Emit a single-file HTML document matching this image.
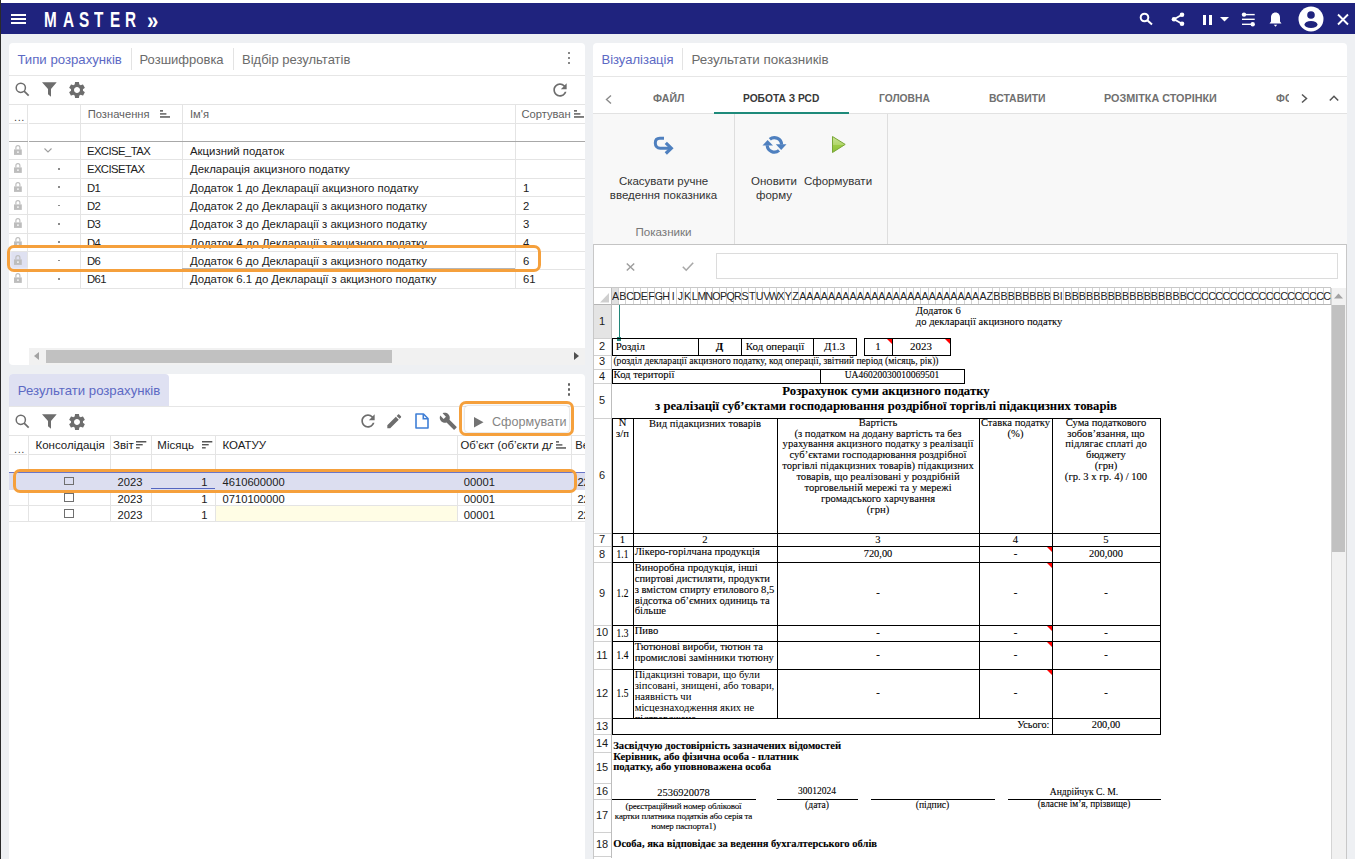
<!DOCTYPE html><html><head><meta charset="utf-8"><style>
html,body{margin:0;padding:0}
body{width:1355px;height:859px;overflow:hidden;position:relative;background:#eef0f3;font-family:"Liberation Sans",sans-serif;color:#212121}
div{box-sizing:border-box}
svg{position:absolute;overflow:visible}
.ss{font-family:"Liberation Serif",serif;color:#000}
.fs{-webkit-text-stroke:0.2px #000}
</style></head><body>
<div style="position:absolute;left:0px;top:0px;width:1355px;height:3px;background:#fff"></div>
<div style="position:absolute;left:0px;top:0px;width:1px;height:859px;background:#2a2a2a;z-index:50"></div>
<div style="position:absolute;left:1px;top:3px;width:1354px;height:31px;background:#1f237e"></div>
<div style="position:absolute;left:11px;top:14.1px;width:15px;height:1.75px;background:#fff"></div>
<div style="position:absolute;left:11px;top:18.1px;width:15px;height:1.75px;background:#fff"></div>
<div style="position:absolute;left:11px;top:22.1px;width:15px;height:1.75px;background:#fff"></div>
<div style="position:absolute;left:43.5px;top:7.2px;white-space:pre;font:bold 22.5px 'Liberation Sans', sans-serif;color:#fff;transform:scaleX(0.68);transform-origin:0 0">M</div>
<div style="position:absolute;left:62.6px;top:7.2px;white-space:pre;font:bold 22.5px 'Liberation Sans', sans-serif;color:#fff;transform:scaleX(0.68);transform-origin:0 0">A</div>
<div style="position:absolute;left:79.3px;top:7.2px;white-space:pre;font:bold 22.5px 'Liberation Sans', sans-serif;color:#fff;transform:scaleX(0.68);transform-origin:0 0">S</div>
<div style="position:absolute;left:93.9px;top:7.2px;white-space:pre;font:bold 22.5px 'Liberation Sans', sans-serif;color:#fff;transform:scaleX(0.68);transform-origin:0 0">T</div>
<div style="position:absolute;left:109.6px;top:7.2px;white-space:pre;font:bold 22.5px 'Liberation Sans', sans-serif;color:#fff;transform:scaleX(0.68);transform-origin:0 0">E</div>
<div style="position:absolute;left:124.6px;top:7.2px;white-space:pre;font:bold 22.5px 'Liberation Sans', sans-serif;color:#fff;transform:scaleX(0.68);transform-origin:0 0">R</div>
<div style="position:absolute;left:147.2px;top:6.5px;white-space:pre;font:bold 24px 'Liberation Sans', sans-serif;color:#fff;transform:scaleX(0.85);transform-origin:0 0">»</div>
<svg style="left:1139px;top:12px" width="15" height="14" viewBox="0 0 15 14"><circle cx="5.5" cy="5.5" r="3.8" fill="none" stroke="#fff" stroke-width="2"/><line x1="8.3" y1="8.3" x2="13" y2="12.6" stroke="#fff" stroke-width="2"/></svg>
<svg style="left:1171px;top:12px" width="15" height="15" viewBox="0 0 15 15"><circle cx="11" cy="2.8" r="2.3" fill="#fff"/><circle cx="3" cy="7.3" r="2.3" fill="#fff"/><circle cx="11" cy="11.8" r="2.3" fill="#fff"/><path d="M11 2.8 L3 7.3 L11 11.8" fill="none" stroke="#fff" stroke-width="1.8"/></svg>
<div style="position:absolute;left:1203px;top:14.5px;width:3px;height:10px;background:#fff"></div>
<div style="position:absolute;left:1209px;top:14.5px;width:3px;height:10px;background:#fff"></div>
<svg style="left:1219.5px;top:17px" width="9" height="5" viewBox="0 0 9 5"><path d="M0 0 L9 0 L4.5 4.5Z" fill="#fff"/></svg>
<svg style="left:1241px;top:12px" width="15" height="15" viewBox="0 0 15 15"><rect x="1" y="1.9" width="12.7" height="1.4" fill="#fff"/><rect x="1" y="6.6" width="12.7" height="1.4" fill="#fff"/><rect x="1" y="11.6" width="10.7" height="1.4" fill="#fff"/><circle cx="3" cy="2.6" r="2.2" fill="#fff"/><circle cx="11.7" cy="12.3" r="2.2" fill="#fff"/></svg>
<svg style="left:1269px;top:11.5px" width="13" height="15" viewBox="0 0 13 15"><path d="M6.5 0.5 C3.6 0.5 2 2.8 2 5.5 V9.5 L0.5 11.5 H12.5 L11 9.5 V5.5 C11 2.8 9.4 0.5 6.5 0.5Z" fill="#fff"/><path d="M4.8 12.8 H8.2 L6.5 14.8Z" fill="#fff"/></svg>
<svg style="left:1297.5px;top:6px" width="26" height="26" viewBox="0 0 26 26"><circle cx="13" cy="13" r="12.5" fill="#fff"/><circle cx="13" cy="9" r="3.8" fill="#1f237e"/><ellipse cx="13" cy="18.5" rx="6.5" ry="3.6" fill="#1f237e"/></svg>
<svg style="left:1337px;top:13.5px" width="12" height="11" viewBox="0 0 12 11"><path d="M1 0.5 L11 10.5 M11 0.5 L1 10.5" stroke="#fff" stroke-width="1.9"/></svg>
<div style="position:absolute;left:9px;top:43px;width:575.5px;height:321.6px;background:#fff;border-radius:4px"></div>
<div style="position:absolute;left:17.4px;top:51.5px;white-space:pre;font:13.2px 'Liberation Sans', sans-serif;color:#5c69c4">Типи розрахунків</div>
<div style="position:absolute;left:130.5px;top:48px;width:1px;height:22px;background:#e3e3e3"></div>
<div style="position:absolute;left:139.5px;top:51.5px;white-space:pre;font:13px 'Liberation Sans', sans-serif;color:#6b6b6b">Розшифровка</div>
<div style="position:absolute;left:232.5px;top:48px;width:1px;height:22px;background:#e3e3e3"></div>
<div style="position:absolute;left:242px;top:51.5px;white-space:pre;font:13px 'Liberation Sans', sans-serif;color:#6b6b6b">Відбір результатів</div>
<div style="position:absolute;left:567.5px;top:51.5px;width:2.9px;height:2.9px;border-radius:50%;background:#616161"></div>
<div style="position:absolute;left:567.5px;top:56.5px;width:2.9px;height:2.9px;border-radius:50%;background:#616161"></div>
<div style="position:absolute;left:567.5px;top:61.5px;width:2.9px;height:2.9px;border-radius:50%;background:#616161"></div>
<div style="position:absolute;left:9px;top:75px;width:575.5px;height:1px;background:#e6e6e6"></div>
<svg style="left:15px;top:82px" width="15" height="15" viewBox="0 0 15 15"><circle cx="5.8" cy="5.8" r="4.6" fill="none" stroke="#6d6d6d" stroke-width="1.5"/><line x1="9.1" y1="9.1" x2="13.7" y2="13.7" stroke="#6d6d6d" stroke-width="1.7"/></svg>
<svg style="left:42.2px;top:82px" width="15" height="15" viewBox="0 0 15 15"><path d="M0 0.3 H14.7 L9 7 V14.8 L6 12.3 V7Z" fill="#6d6d6d"/></svg>
<svg style="left:66.8px;top:79.8px" width="20" height="20" viewBox="0 0 24 24"><path fill="#6d6d6d" d="M19.14 12.94c.04-.3.06-.61.06-.94 0-.32-.02-.64-.07-.94l2.03-1.58c.18-.14.23-.41.12-.61l-1.92-3.32c-.12-.22-.37-.29-.59-.22l-2.39.96c-.5-.38-1.03-.7-1.62-.94l-.36-2.54c-.04-.24-.24-.41-.48-.41h-3.84c-.24 0-.43.17-.47.41l-.36 2.54c-.59.24-1.13.57-1.62.94l-2.39-.96c-.22-.08-.47 0-.59.22L2.74 8.87c-.12.21-.08.47.12.61l2.03 1.58c-.05.3-.09.63-.09.94s.02.64.07.94l-2.03 1.58c-.18.14-.23.41-.12.61l1.92 3.32c.12.22.37.29.59.22l2.39-.96c.5.38 1.03.7 1.62.94l.36 2.54c.05.24.24.41.48.41h3.84c.24 0 .44-.17.47-.41l.36-2.54c.59-.24 1.13-.56 1.62-.94l2.39.96c.22.08.47 0 .59-.22l1.92-3.32c.12-.22.07-.47-.12-.61l-2.01-1.58zM12 15.6c-1.98 0-3.6-1.62-3.6-3.6s1.62-3.6 3.6-3.6 3.6 1.62 3.6 3.6-1.62 3.6-3.6 3.6z"/></svg>
<svg style="left:549.5px;top:79.6px" width="20" height="20" viewBox="0 0 24 24"><path fill="#6d6d6d" d="M17.65 6.35C16.2 4.9 14.21 4 12 4c-4.42 0-7.99 3.58-7.99 8s3.57 8 7.99 8c3.73 0 6.84-2.55 7.73-6h-2.08c-.82 2.33-3.04 4-5.65 4-3.31 0-6-2.69-6-6s2.69-6 6-6c1.66 0 3.14.69 4.22 1.78L13 11h7V4l-2.35 2.35z"/></svg>
<div style="position:absolute;left:9px;top:104.3px;width:575.5px;height:1px;background:#e4e4e4"></div>
<div style="position:absolute;left:27px;top:104.3px;width:1px;height:183.6px;background:#e4e4e4"></div>
<div style="position:absolute;left:80px;top:104.3px;width:1px;height:183.6px;background:#e4e4e4"></div>
<div style="position:absolute;left:182px;top:104.3px;width:1px;height:183.6px;background:#e4e4e4"></div>
<div style="position:absolute;left:515px;top:104.3px;width:1px;height:183.6px;background:#e4e4e4"></div>
<div style="position:absolute;left:9px;top:123px;width:18px;height:1px;background:#e4e4e4"></div>
<div style="position:absolute;left:29px;top:123px;width:555.5px;height:1px;background:#e4e4e4"></div>
<div style="position:absolute;left:9px;top:141px;width:18.5px;height:1.2px;background:#a8a8a8"></div>
<div style="position:absolute;left:29px;top:141px;width:555.5px;height:1.2px;background:#a8a8a8"></div>
<div style="position:absolute;left:9px;top:159.4px;width:575.5px;height:1px;background:#e4e4e4"></div>
<div style="position:absolute;left:9px;top:177.8px;width:575.5px;height:1px;background:#e4e4e4"></div>
<div style="position:absolute;left:9px;top:196.1px;width:575.5px;height:1px;background:#e4e4e4"></div>
<div style="position:absolute;left:9px;top:214.4px;width:575.5px;height:1px;background:#e4e4e4"></div>
<div style="position:absolute;left:9px;top:232.8px;width:575.5px;height:1px;background:#e4e4e4"></div>
<div style="position:absolute;left:9px;top:251.1px;width:575.5px;height:1px;background:#e4e4e4"></div>
<div style="position:absolute;left:9px;top:269.4px;width:575.5px;height:1px;background:#e4e4e4"></div>
<div style="position:absolute;left:9px;top:287.8px;width:575.5px;height:1px;background:#e4e4e4"></div>
<div style="position:absolute;left:14px;top:111px;white-space:pre;font:11px 'Liberation Sans', sans-serif;color:#444;letter-spacing:0.6px">...</div>
<div style="position:absolute;left:87.7px;top:107.8px;white-space:pre;font:11.2px 'Liberation Sans', sans-serif;color:#5f5f5f">Позначення</div>
<svg style="left:160px;top:110.3px" width="10" height="8" viewBox="0 0 10 8"><rect x="0" y="0" width="3" height="1.7" fill="#6b6b6b"/><rect x="0" y="3.1" width="6.4" height="1.6" fill="#6b6b6b"/><rect x="0" y="6.1" width="10" height="1.7" fill="#6b6b6b"/></svg>
<div style="position:absolute;left:190px;top:107.8px;white-space:pre;font:11.2px 'Liberation Sans', sans-serif;color:#5f5f5f">Ім'я</div>
<div style="position:absolute;left:521.4px;top:107.8px;white-space:pre;font:11.2px 'Liberation Sans', sans-serif;color:#5f5f5f">Сортуван</div>
<svg style="left:574px;top:110.3px" width="10" height="8" viewBox="0 0 10 8"><rect x="0" y="0" width="3" height="1.7" fill="#6b6b6b"/><rect x="0" y="3.1" width="6.4" height="1.6" fill="#6b6b6b"/><rect x="0" y="6.1" width="10" height="1.7" fill="#6b6b6b"/></svg>
<svg style="left:14.1px;top:144.89999999999998px" width="8" height="10" viewBox="0 0 8 10"><path d="M1.9 4.6 V2.6 C1.9 1.3 2.8 0.6 3.9 0.6 C5 0.6 5.9 1.3 5.9 2.6 V4.6" fill="none" stroke="#bdbdbd" stroke-width="1.15"/><rect x="0" y="4.4" width="7.8" height="5.5" fill="#bdbdbd"/><rect x="3.3" y="6.3" width="1.3" height="1.7" fill="#fff"/></svg>
<svg style="left:44px;top:148.2px" width="8" height="5" viewBox="0 0 8 5"><path d="M0.5 0.5 L4 4 L7.5 0.5" fill="none" stroke="#9e9e9e" stroke-width="1.1"/></svg>
<div style="position:absolute;left:86.9px;top:145.0px;white-space:pre;font:11.3px 'Liberation Sans', sans-serif;color:#212121;letter-spacing:-0.55px">EXCISE_TAX</div>
<div style="position:absolute;left:190px;top:145.0px;white-space:pre;font:11.4px 'Liberation Sans', sans-serif;color:#212121">Акцизний податок</div>
<div style="position:absolute;left:523px;top:145.0px;white-space:pre;font:11.3px 'Liberation Sans', sans-serif;color:#212121"></div>
<svg style="left:14.1px;top:163.1px" width="8" height="10" viewBox="0 0 8 10"><path d="M1.9 4.6 V2.6 C1.9 1.3 2.8 0.6 3.9 0.6 C5 0.6 5.9 1.3 5.9 2.6 V4.6" fill="none" stroke="#bdbdbd" stroke-width="1.15"/><rect x="0" y="4.4" width="7.8" height="5.5" fill="#bdbdbd"/><rect x="3.3" y="6.3" width="1.3" height="1.7" fill="#fff"/></svg>
<div style="position:absolute;left:58.2px;top:168.0px;width:1.6px;height:1.6px;background:#8a8a8a"></div>
<div style="position:absolute;left:86.9px;top:163.20000000000002px;white-space:pre;font:11.3px 'Liberation Sans', sans-serif;color:#212121;letter-spacing:-0.55px">EXCISETAX</div>
<div style="position:absolute;left:190px;top:163.20000000000002px;white-space:pre;font:11.4px 'Liberation Sans', sans-serif;color:#212121">Декларація акцизного податку</div>
<div style="position:absolute;left:523px;top:163.20000000000002px;white-space:pre;font:11.3px 'Liberation Sans', sans-serif;color:#212121"></div>
<svg style="left:14.1px;top:181.5px" width="8" height="10" viewBox="0 0 8 10"><path d="M1.9 4.6 V2.6 C1.9 1.3 2.8 0.6 3.9 0.6 C5 0.6 5.9 1.3 5.9 2.6 V4.6" fill="none" stroke="#bdbdbd" stroke-width="1.15"/><rect x="0" y="4.4" width="7.8" height="5.5" fill="#bdbdbd"/><rect x="3.3" y="6.3" width="1.3" height="1.7" fill="#fff"/></svg>
<div style="position:absolute;left:58.2px;top:186.4px;width:1.6px;height:1.6px;background:#8a8a8a"></div>
<div style="position:absolute;left:86.9px;top:181.60000000000002px;white-space:pre;font:11.3px 'Liberation Sans', sans-serif;color:#212121;letter-spacing:-0.55px">D1</div>
<div style="position:absolute;left:190px;top:181.60000000000002px;white-space:pre;font:11.4px 'Liberation Sans', sans-serif;color:#212121">Додаток 1 до Декларації акцизного податку</div>
<div style="position:absolute;left:523px;top:181.60000000000002px;white-space:pre;font:11.3px 'Liberation Sans', sans-serif;color:#212121">1</div>
<svg style="left:14.1px;top:199.79999999999998px" width="8" height="10" viewBox="0 0 8 10"><path d="M1.9 4.6 V2.6 C1.9 1.3 2.8 0.6 3.9 0.6 C5 0.6 5.9 1.3 5.9 2.6 V4.6" fill="none" stroke="#bdbdbd" stroke-width="1.15"/><rect x="0" y="4.4" width="7.8" height="5.5" fill="#bdbdbd"/><rect x="3.3" y="6.3" width="1.3" height="1.7" fill="#fff"/></svg>
<div style="position:absolute;left:58.2px;top:204.7px;width:1.6px;height:1.6px;background:#8a8a8a"></div>
<div style="position:absolute;left:86.9px;top:199.9px;white-space:pre;font:11.3px 'Liberation Sans', sans-serif;color:#212121;letter-spacing:-0.55px">D2</div>
<div style="position:absolute;left:190px;top:199.9px;white-space:pre;font:11.4px 'Liberation Sans', sans-serif;color:#212121">Додаток 2 до Декларації з акцизного податку</div>
<div style="position:absolute;left:523px;top:199.9px;white-space:pre;font:11.3px 'Liberation Sans', sans-serif;color:#212121">2</div>
<svg style="left:14.1px;top:218.1px" width="8" height="10" viewBox="0 0 8 10"><path d="M1.9 4.6 V2.6 C1.9 1.3 2.8 0.6 3.9 0.6 C5 0.6 5.9 1.3 5.9 2.6 V4.6" fill="none" stroke="#bdbdbd" stroke-width="1.15"/><rect x="0" y="4.4" width="7.8" height="5.5" fill="#bdbdbd"/><rect x="3.3" y="6.3" width="1.3" height="1.7" fill="#fff"/></svg>
<div style="position:absolute;left:58.2px;top:223.0px;width:1.6px;height:1.6px;background:#8a8a8a"></div>
<div style="position:absolute;left:86.9px;top:218.20000000000002px;white-space:pre;font:11.3px 'Liberation Sans', sans-serif;color:#212121;letter-spacing:-0.55px">D3</div>
<div style="position:absolute;left:190px;top:218.20000000000002px;white-space:pre;font:11.4px 'Liberation Sans', sans-serif;color:#212121">Додаток 3 до Декларації з акцизного податку</div>
<div style="position:absolute;left:523px;top:218.20000000000002px;white-space:pre;font:11.3px 'Liberation Sans', sans-serif;color:#212121">3</div>
<svg style="left:14.1px;top:236.5px" width="8" height="10" viewBox="0 0 8 10"><path d="M1.9 4.6 V2.6 C1.9 1.3 2.8 0.6 3.9 0.6 C5 0.6 5.9 1.3 5.9 2.6 V4.6" fill="none" stroke="#bdbdbd" stroke-width="1.15"/><rect x="0" y="4.4" width="7.8" height="5.5" fill="#bdbdbd"/><rect x="3.3" y="6.3" width="1.3" height="1.7" fill="#fff"/></svg>
<div style="position:absolute;left:58.2px;top:241.4px;width:1.6px;height:1.6px;background:#8a8a8a"></div>
<div style="position:absolute;left:86.9px;top:236.60000000000002px;white-space:pre;font:11.3px 'Liberation Sans', sans-serif;color:#212121;letter-spacing:-0.55px">D4</div>
<div style="position:absolute;left:190px;top:236.60000000000002px;white-space:pre;font:11.4px 'Liberation Sans', sans-serif;color:#212121">Додаток 4 до Декларації з акцизного податку</div>
<div style="position:absolute;left:523px;top:236.60000000000002px;white-space:pre;font:11.3px 'Liberation Sans', sans-serif;color:#212121">4</div>
<div style="position:absolute;left:9px;top:252.1px;width:18px;height:18px;background:#dfe1f1"></div>
<div style="position:absolute;left:182px;top:268.4px;width:333px;height:1px;background:#9a9a9a"></div>
<svg style="left:14.1px;top:254.79999999999998px" width="8" height="10" viewBox="0 0 8 10"><path d="M1.9 4.6 V2.6 C1.9 1.3 2.8 0.6 3.9 0.6 C5 0.6 5.9 1.3 5.9 2.6 V4.6" fill="none" stroke="#bdbdbd" stroke-width="1.15"/><rect x="0" y="4.4" width="7.8" height="5.5" fill="#bdbdbd"/><rect x="3.3" y="6.3" width="1.3" height="1.7" fill="#fff"/></svg>
<div style="position:absolute;left:58.2px;top:259.7px;width:1.6px;height:1.6px;background:#8a8a8a"></div>
<div style="position:absolute;left:86.9px;top:254.9px;white-space:pre;font:11.3px 'Liberation Sans', sans-serif;color:#212121;letter-spacing:-0.55px">D6</div>
<div style="position:absolute;left:190px;top:254.9px;white-space:pre;font:11.4px 'Liberation Sans', sans-serif;color:#212121">Додаток 6 до Декларації з акцизного податку</div>
<div style="position:absolute;left:523px;top:254.9px;white-space:pre;font:11.3px 'Liberation Sans', sans-serif;color:#212121">6</div>
<svg style="left:14.1px;top:273.09999999999997px" width="8" height="10" viewBox="0 0 8 10"><path d="M1.9 4.6 V2.6 C1.9 1.3 2.8 0.6 3.9 0.6 C5 0.6 5.9 1.3 5.9 2.6 V4.6" fill="none" stroke="#bdbdbd" stroke-width="1.15"/><rect x="0" y="4.4" width="7.8" height="5.5" fill="#bdbdbd"/><rect x="3.3" y="6.3" width="1.3" height="1.7" fill="#fff"/></svg>
<div style="position:absolute;left:58.2px;top:278.0px;width:1.6px;height:1.6px;background:#8a8a8a"></div>
<div style="position:absolute;left:86.9px;top:273.2px;white-space:pre;font:11.3px 'Liberation Sans', sans-serif;color:#212121;letter-spacing:-0.55px">D61</div>
<div style="position:absolute;left:190px;top:273.2px;white-space:pre;font:11.4px 'Liberation Sans', sans-serif;color:#212121">Додаток 6.1 до Декларації з акцизного податку</div>
<div style="position:absolute;left:523px;top:273.2px;white-space:pre;font:11.3px 'Liberation Sans', sans-serif;color:#212121">61</div>
<div style="position:absolute;left:29px;top:348px;width:555.5px;height:16.6px;background:#f1f1f1"></div>
<div style="position:absolute;left:46px;top:350px;width:346px;height:12.7px;background:#c1c1c1"></div>
<svg style="left:34px;top:352px" width="5" height="8" viewBox="0 0 5 8"><path d="M5 0 L0 4 L5 8Z" fill="#a3a3a3"/></svg>
<svg style="left:574px;top:352px" width="5" height="8" viewBox="0 0 5 8"><path d="M0 0 L5 4 L0 8Z" fill="#505050"/></svg>
<div style="position:absolute;left:6.5px;top:245.2px;width:534.5px;height:27.3px;border:3px solid #f5a03c;border-radius:7px;z-index:20;box-shadow:inset 0 0 3px rgba(255,255,255,.8)"></div>
<div style="position:absolute;left:9px;top:374px;width:575.5px;height:490px;background:#fff;border-radius:4px 4px 0 0"></div>
<div style="position:absolute;left:9px;top:374px;width:159.7px;height:31.5px;background:#dfe1f2;border-radius:4px 4px 0 0"></div>
<div style="position:absolute;left:17.8px;top:383px;white-space:pre;font:13.2px 'Liberation Sans', sans-serif;color:#5c69c4">Результати розрахунків</div>
<div style="position:absolute;left:567.5px;top:383px;width:2.9px;height:2.9px;border-radius:50%;background:#616161"></div>
<div style="position:absolute;left:567.5px;top:388px;width:2.9px;height:2.9px;border-radius:50%;background:#616161"></div>
<div style="position:absolute;left:567.5px;top:393px;width:2.9px;height:2.9px;border-radius:50%;background:#616161"></div>
<div style="position:absolute;left:9px;top:405.5px;width:575.5px;height:1px;background:#e6e6e6"></div>
<svg style="left:15px;top:414px" width="15" height="15" viewBox="0 0 15 15"><circle cx="5.8" cy="5.8" r="4.6" fill="none" stroke="#6d6d6d" stroke-width="1.5"/><line x1="9.1" y1="9.1" x2="13.7" y2="13.7" stroke="#6d6d6d" stroke-width="1.7"/></svg>
<svg style="left:42.2px;top:414px" width="15" height="15" viewBox="0 0 15 15"><path d="M0 0.3 H14.7 L9 7 V14.8 L6 12.3 V7Z" fill="#6d6d6d"/></svg>
<svg style="left:66.8px;top:411.8px" width="20" height="20" viewBox="0 0 24 24"><path fill="#6d6d6d" d="M19.14 12.94c.04-.3.06-.61.06-.94 0-.32-.02-.64-.07-.94l2.03-1.58c.18-.14.23-.41.12-.61l-1.92-3.32c-.12-.22-.37-.29-.59-.22l-2.39.96c-.5-.38-1.03-.7-1.62-.94l-.36-2.54c-.04-.24-.24-.41-.48-.41h-3.84c-.24 0-.43.17-.47.41l-.36 2.54c-.59.24-1.13.57-1.62.94l-2.39-.96c-.22-.08-.47 0-.59.22L2.74 8.87c-.12.21-.08.47.12.61l2.03 1.58c-.05.3-.09.63-.09.94s.02.64.07.94l-2.03 1.58c-.18.14-.23.41-.12.61l1.92 3.32c.12.22.37.29.59.22l2.39-.96c.5.38 1.03.7 1.62.94l.36 2.54c.05.24.24.41.48.41h3.84c.24 0 .44-.17.47-.41l.36-2.54c.59-.24 1.13-.56 1.62-.94l2.39.96c.22.08.47 0 .59-.22l1.92-3.32c.12-.22.07-.47-.12-.61l-2.01-1.58zM12 15.6c-1.98 0-3.6-1.62-3.6-3.6s1.62-3.6 3.6-3.6 3.6 1.62 3.6 3.6-1.62 3.6-3.6 3.6z"/></svg>
<svg style="left:357.6px;top:411px" width="20" height="20" viewBox="0 0 24 24"><path fill="#6d6d6d" d="M17.65 6.35C16.2 4.9 14.21 4 12 4c-4.42 0-7.99 3.58-7.99 8s3.57 8 7.99 8c3.73 0 6.84-2.55 7.73-6h-2.08c-.82 2.33-3.04 4-5.65 4-3.31 0-6-2.69-6-6s2.69-6 6-6c1.66 0 3.14.69 4.22 1.78L13 11h7V4l-2.35 2.35z"/></svg>
<svg style="left:384.8px;top:411.5px" width="18.5" height="18.5" viewBox="0 0 24 24"><path fill="#6d6d6d" d="M3 17.25V21h3.75L17.81 9.94l-3.75-3.75L3 17.25zM20.71 7.04c.39-.39.39-1.02 0-1.41l-2.34-2.34c-.39-.39-1.02-.39-1.41 0l-1.83 1.83 3.75 3.75 1.83-1.83z"/></svg>
<svg style="left:414.5px;top:413px" width="14" height="16" viewBox="0 0 14 16"><path d="M1 1 H8.5 L13 5.5 V15 H1Z" fill="none" stroke="#3f7fd6" stroke-width="1.6" stroke-linejoin="round"/><path d="M8.3 1 V5.7 H13" fill="none" stroke="#3f7fd6" stroke-width="1.6"/></svg>
<svg style="left:439px;top:412px" width="18.5" height="18.5" viewBox="0 0 24 24"><path fill="#6d6d6d" d="M22.7 19l-9.1-9.1c.9-2.3.4-5-1.5-6.9-2-2-5-2.4-7.4-1.3L9 6 6 9 1.6 4.7C.4 7.1.9 10.1 2.9 12.1c1.9 1.9 4.6 2.4 6.9 1.5l9.1 9.1c.4.4 1 .4 1.4 0l2.3-2.3c.5-.4.5-1.1.1-1.4z"/></svg>
<div style="position:absolute;left:464.5px;top:406px;width:104.5px;height:25.5px;background:#fff;border-radius:3px;box-shadow:0 0 2.5px rgba(0,0,0,.28)"></div>
<svg style="left:473.8px;top:416.5px" width="10" height="11" viewBox="0 0 10 11"><path d="M0 0 L9.5 5.3 L0 10.6Z" fill="#737373"/></svg>
<div style="position:absolute;left:492px;top:415px;white-space:pre;font:12.6px 'Liberation Sans', sans-serif;color:#858585">Сформувати</div>
<div style="position:absolute;left:459px;top:401px;width:115px;height:34.6px;border:3px solid #f5a03c;border-radius:7px;z-index:20"></div>
<div style="position:absolute;left:9px;top:435.3px;width:575.5px;height:1px;background:#e4e4e4"></div>
<div style="position:absolute;left:27.5px;top:435.3px;width:1px;height:86px;background:#e4e4e4"></div>
<div style="position:absolute;left:109.5px;top:435.3px;width:1px;height:86px;background:#e4e4e4"></div>
<div style="position:absolute;left:150.6px;top:435.3px;width:1px;height:86px;background:#e4e4e4"></div>
<div style="position:absolute;left:215.4px;top:435.3px;width:1px;height:86px;background:#e4e4e4"></div>
<div style="position:absolute;left:456.7px;top:435.3px;width:1px;height:86px;background:#e4e4e4"></div>
<div style="position:absolute;left:570.5px;top:435.3px;width:1px;height:86px;background:#e4e4e4"></div>
<div style="position:absolute;left:9px;top:454.4px;width:18px;height:1px;background:#e4e4e4"></div>
<div style="position:absolute;left:29px;top:454.4px;width:555.5px;height:1px;background:#e4e4e4"></div>
<div style="position:absolute;left:14px;top:443px;white-space:pre;font:11px 'Liberation Sans', sans-serif;color:#444;letter-spacing:0.6px">...</div>
<div style="position:absolute;left:35.5px;top:439.2px;white-space:pre;font:11.5px 'Liberation Sans', sans-serif;color:#212121">Консолідація</div>
<div style="position:absolute;left:113px;top:439.2px;white-space:pre;font:11.5px 'Liberation Sans', sans-serif;color:#212121">Звіт</div>
<svg style="left:136.3px;top:441.3px" width="11" height="8" viewBox="0 0 11 8"><rect x="0" y="0" width="10.3" height="1.5" fill="#555"/><rect x="0" y="3" width="6.7" height="1.4" fill="#555"/><rect x="0" y="6.1" width="3.7" height="1.4" fill="#555"/></svg>
<div style="position:absolute;left:157.3px;top:439.2px;white-space:pre;font:11.5px 'Liberation Sans', sans-serif;color:#212121">Місяць</div>
<svg style="left:201.7px;top:441.3px" width="11" height="8" viewBox="0 0 11 8"><rect x="0" y="0" width="10.3" height="1.5" fill="#555"/><rect x="0" y="3" width="6.7" height="1.4" fill="#555"/><rect x="0" y="6.1" width="3.7" height="1.4" fill="#555"/></svg>
<div style="position:absolute;left:222.5px;top:439.2px;white-space:pre;font:11.5px 'Liberation Sans', sans-serif;color:#212121">КОАТУУ</div>
<div style="position:absolute;left:460.5px;top:439.2px;width:94px;white-space:pre;font:11.3px 'Liberation Sans', sans-serif;color:#212121">Об’єкт (об’єкти дл</div>
<div style="position:absolute;left:553px;top:436px;width:17px;height:17px;background:#fff"></div>
<svg style="left:555.7px;top:441px" width="10" height="8" viewBox="0 0 10 8"><rect x="0" y="0" width="3" height="1.7" fill="#6b6b6b"/><rect x="0" y="3.1" width="6.4" height="1.6" fill="#6b6b6b"/><rect x="0" y="6.1" width="10" height="1.7" fill="#6b6b6b"/></svg>
<div style="position:absolute;left:575.2px;top:439.2px;white-space:pre;font:11.3px 'Liberation Sans', sans-serif;color:#212121">Ве</div>
<div style="position:absolute;left:9px;top:472.5px;width:575.5px;height:17px;background:#dcdef0"></div>
<div style="position:absolute;left:9px;top:472px;width:575.5px;height:1.2px;background:#6a76c8"></div>
<div style="position:absolute;left:150.6px;top:487.8px;width:64.8px;height:1.2px;background:#5566c0"></div>
<div style="position:absolute;left:9px;top:505.3px;width:575.5px;height:1px;background:#e4e4e4"></div>
<div style="position:absolute;left:9px;top:521.2px;width:575.5px;height:1px;background:#e4e4e4"></div>
<div style="position:absolute;left:216px;top:506px;width:240.5px;height:15.2px;background:#fffde5"></div>
<div style="position:absolute;left:64px;top:476.5px;width:10px;height:8.6px;border:1px solid #6f6f6f;background:transparent"></div>
<div style="position:absolute;left:109.5px;top:475.8px;width:33px;white-space:pre;font:11.2px 'Liberation Sans', sans-serif;color:#212121;text-align:right">2023</div>
<div style="position:absolute;left:150.6px;top:475.8px;width:57px;white-space:pre;font:11.2px 'Liberation Sans', sans-serif;color:#212121;text-align:right">1</div>
<div style="position:absolute;left:222.5px;top:475.8px;white-space:pre;font:11.2px 'Liberation Sans', sans-serif;color:#212121">4610600000</div>
<div style="position:absolute;left:463.8px;top:475.8px;white-space:pre;font:11.2px 'Liberation Sans', sans-serif;color:#212121">00001</div>
<div style="position:absolute;left:577.4px;top:475.8px;white-space:pre;font:11.2px 'Liberation Sans', sans-serif;color:#212121">22</div>
<div style="position:absolute;left:64px;top:493.3px;width:10px;height:8.6px;border:1px solid #6f6f6f;background:transparent"></div>
<div style="position:absolute;left:109.5px;top:492.6px;width:33px;white-space:pre;font:11.2px 'Liberation Sans', sans-serif;color:#212121;text-align:right">2023</div>
<div style="position:absolute;left:150.6px;top:492.6px;width:57px;white-space:pre;font:11.2px 'Liberation Sans', sans-serif;color:#212121;text-align:right">1</div>
<div style="position:absolute;left:222.5px;top:492.6px;white-space:pre;font:11.2px 'Liberation Sans', sans-serif;color:#212121">0710100000</div>
<div style="position:absolute;left:463.8px;top:492.6px;white-space:pre;font:11.2px 'Liberation Sans', sans-serif;color:#212121">00001</div>
<div style="position:absolute;left:577.4px;top:492.6px;white-space:pre;font:11.2px 'Liberation Sans', sans-serif;color:#212121">22</div>
<div style="position:absolute;left:64px;top:509.3px;width:10px;height:8.6px;border:1px solid #6f6f6f;background:transparent"></div>
<div style="position:absolute;left:109.5px;top:508.6px;width:33px;white-space:pre;font:11.2px 'Liberation Sans', sans-serif;color:#212121;text-align:right">2023</div>
<div style="position:absolute;left:150.6px;top:508.6px;width:57px;white-space:pre;font:11.2px 'Liberation Sans', sans-serif;color:#212121;text-align:right">1</div>
<div style="position:absolute;left:222.5px;top:508.6px;white-space:pre;font:11.2px 'Liberation Sans', sans-serif;color:#212121"></div>
<div style="position:absolute;left:463.8px;top:508.6px;white-space:pre;font:11.2px 'Liberation Sans', sans-serif;color:#212121">00001</div>
<div style="position:absolute;left:577.4px;top:508.6px;white-space:pre;font:11.2px 'Liberation Sans', sans-serif;color:#212121">22</div>
<div style="position:absolute;left:584.5px;top:374px;width:8.5px;height:490px;background:#eef0f3;z-index:10"></div>
<div style="position:absolute;left:584.5px;top:43px;width:8.5px;height:321.6px;background:#eef0f3;z-index:10"></div>
<div style="position:absolute;left:13px;top:469.3px;width:563.7px;height:24.1px;border:3px solid #f5a03c;border-radius:7px;z-index:20"></div>
<div style="position:absolute;left:593px;top:43px;width:754px;height:820px;background:#fff;border-radius:4px 4px 0 0"></div>
<div style="position:absolute;left:601.5px;top:51.5px;white-space:pre;font:13px 'Liberation Sans', sans-serif;color:#5c69c4">Візуалізація</div>
<div style="position:absolute;left:682.3px;top:48px;width:1px;height:22px;background:#e3e3e3"></div>
<div style="position:absolute;left:691.4px;top:51.5px;white-space:pre;font:13.4px 'Liberation Sans', sans-serif;color:#6b6b6b">Результати показників</div>
<div style="position:absolute;left:593px;top:75.5px;width:754px;height:1px;background:#e6e6e6"></div>
<svg style="left:605px;top:94.5px" width="7" height="9" viewBox="0 0 7 9"><path d="M6 0.5 L1.5 4.5 L6 8.5" fill="none" stroke="#8a8a8a" stroke-width="1.4"/></svg>
<div style="position:absolute;left:652.8px;top:91.9px;white-space:pre;font:bold 11.2px 'Liberation Sans', sans-serif;color:#707070;transform:scaleX(0.946);transform-origin:0 0">ФАЙЛ</div>
<div style="position:absolute;left:743px;top:91.9px;white-space:pre;font:bold 11.2px 'Liberation Sans', sans-serif;color:#383838;transform:scaleX(0.913);transform-origin:0 0">РОБОТА З РСD</div>
<div style="position:absolute;left:878.7px;top:91.9px;white-space:pre;font:bold 11.2px 'Liberation Sans', sans-serif;color:#707070;transform:scaleX(0.917);transform-origin:0 0">ГОЛОВНА</div>
<div style="position:absolute;left:988.8px;top:91.9px;white-space:pre;font:bold 11.2px 'Liberation Sans', sans-serif;color:#707070;transform:scaleX(0.932);transform-origin:0 0">ВСТАВИТИ</div>
<div style="position:absolute;left:1104.4px;top:91.9px;white-space:pre;font:bold 11.2px 'Liberation Sans', sans-serif;color:#707070;transform:scaleX(0.965);transform-origin:0 0">РОЗМІТКА СТОРІНКИ</div>
<div style="position:absolute;left:1276.3px;top:91.9px;width:12.5px;height:16px;overflow:hidden;white-space:pre"><div style="font:bold 11.2px 'Liberation Sans', sans-serif;color:#707070;transform:scaleX(0.93);transform-origin:0 0">ФОРМУЛИ</div></div>
<svg style="left:1300.5px;top:94px" width="7" height="9" viewBox="0 0 7 9"><path d="M1 0.5 L5.5 4.5 L1 8.5" fill="none" stroke="#555" stroke-width="1.5"/></svg>
<svg style="left:1328.5px;top:94.5px" width="10" height="6" viewBox="0 0 10 6"><path d="M0.8 5.5 L5 1.2 L9.2 5.5" fill="none" stroke="#555" stroke-width="1.5"/></svg>
<div style="position:absolute;left:593px;top:112.6px;width:754px;height:1.5px;background:#e2e2e2"></div>
<div style="position:absolute;left:714.1px;top:112px;width:134.8px;height:2.2px;background:#1e8a7a"></div>
<div style="position:absolute;left:593px;top:114px;width:754px;height:130.4px;background:#f8f8f8"></div>
<div style="position:absolute;left:734px;top:114px;width:1px;height:130.4px;background:#dedede"></div>
<div style="position:absolute;left:887px;top:114px;width:1px;height:130.4px;background:#dedede"></div>
<div style="position:absolute;left:593px;top:244.2px;width:754px;height:1.2px;background:#c4c4c4"></div>
<svg style="left:648px;top:132px" width="32" height="26" viewBox="0 0 32 26"><path d="M16 6.35 H11.8 C8.3 6.35 7.3 8.6 7.3 11 C7.3 14 9.2 16.2 12.2 16.2 H23" fill="none" stroke="#4f80bf" stroke-width="3"/><path d="M17.8 10.8 L23.3 16.2 L17.8 21.5" fill="none" stroke="#4f80bf" stroke-width="3.2" stroke-linejoin="miter"/></svg>
<svg style="left:757px;top:132px" width="35" height="26" viewBox="0 0 35 26"><path d="M12.8 7.35 A7.2 7.2 0 0 1 24.6 12.6" fill="none" stroke="#4f80bf" stroke-width="3.2"/><path d="M18.8 12.3 H29.5 L24.2 17.9Z" fill="#4f80bf"/><path d="M10.2 13.2 A7.2 7.2 0 0 0 22.03 18.4" fill="none" stroke="#4f80bf" stroke-width="3.2"/><path d="M5.45 13.6 H16 L10.6 8Z" fill="#4f80bf"/></svg>
<svg style="left:831px;top:135px" width="16" height="19" viewBox="0 0 16 19"><defs><linearGradient id="gp" x1="0" y1="0" x2="0" y2="1"><stop offset="0" stop-color="#c9e495"/><stop offset="0.5" stop-color="#b2d66c"/><stop offset="0.55" stop-color="#9ccb45"/><stop offset="1" stop-color="#8cc03a"/></linearGradient></defs><path d="M1.5 1.5 L14.2 9.4 L1.5 17.5Z" fill="url(#gp)" stroke="#79a637" stroke-width="1" stroke-linejoin="round"/></svg>
<div style="position:absolute;left:598px;top:174px;width:131px;white-space:pre;font:11.5px 'Liberation Sans', sans-serif;color:#333;text-align:center;line-height:14px">Скасувати ручне
введення показника</div>
<div style="position:absolute;left:742px;top:174px;width:64px;white-space:pre;font:11.5px 'Liberation Sans', sans-serif;color:#333;text-align:center;line-height:14px">Оновити
форму</div>
<div style="position:absolute;left:799px;top:174px;width:78px;white-space:pre;font:11.5px 'Liberation Sans', sans-serif;color:#333;text-align:center;line-height:14px">Сформувати</div>
<div style="position:absolute;left:598px;top:225px;width:131px;white-space:pre;font:11.6px 'Liberation Sans', sans-serif;color:#777;text-align:center">Показники</div>
<div style="position:absolute;left:593px;top:245.4px;width:754px;height:42px;background:#fff"></div>
<div style="position:absolute;left:593px;top:244.4px;width:1px;height:620px;background:#c8c8c8;z-index:5"></div>
<div style="position:absolute;left:1346px;top:244.4px;width:1px;height:620px;background:#c8c8c8;z-index:5"></div>
<svg style="left:626px;top:262.5px" width="9" height="8" viewBox="0 0 9 8"><path d="M0.8 0.5 L8.2 7.5 M8.2 0.5 L0.8 7.5" stroke="#9e9e9e" stroke-width="1.5"/></svg>
<svg style="left:681.5px;top:261.5px" width="12" height="9" viewBox="0 0 12 9"><path d="M0.8 4.8 L4.2 8.2 L11.2 0.8" fill="none" stroke="#a8a8a8" stroke-width="1.6"/></svg>
<div style="position:absolute;left:716.2px;top:253.2px;width:621.4px;height:25.7px;border:1px solid #dcdcdc;background:#fff"></div>
<div style="position:absolute;left:594px;top:287.5px;width:737px;height:17.5px;background:#fff"></div>
<div style="position:absolute;left:594px;top:287px;width:737px;height:1px;background:#c8c8c8"></div>
<div style="position:absolute;left:594px;top:304.3px;width:737px;height:1.2px;background:#b5b5b5"></div>
<div style="position:absolute;left:611px;top:287.5px;width:1px;height:570px;background:#bdbdbd;z-index:4"></div>
<svg style="left:600px;top:292.5px" width="9" height="9.5" viewBox="0 0 9 9.5"><path d="M9 0 L9 9.5 L0 9.5Z" fill="#cfcfcf"/></svg>
<div style="position:absolute;left:0;top:0;width:1331px;height:859px;overflow:hidden;pointer-events:none">
<div style="position:absolute;left:612.00px;top:288px;width:7.20px;height:16.3px;border-right:1px solid #d2d2d2;background:#e0e0e0;"></div>
<div style="position:absolute;left:619.20px;top:288px;width:7.20px;height:16.3px;border-right:1px solid #d2d2d2;"></div>
<div style="position:absolute;left:626.39px;top:288px;width:7.20px;height:16.3px;border-right:1px solid #d2d2d2;"></div>
<div style="position:absolute;left:633.59px;top:288px;width:7.20px;height:16.3px;border-right:1px solid #d2d2d2;"></div>
<div style="position:absolute;left:640.78px;top:288px;width:7.20px;height:16.3px;border-right:1px solid #d2d2d2;"></div>
<div style="position:absolute;left:647.98px;top:288px;width:7.20px;height:16.3px;border-right:1px solid #d2d2d2;"></div>
<div style="position:absolute;left:655.18px;top:288px;width:7.20px;height:16.3px;border-right:1px solid #d2d2d2;"></div>
<div style="position:absolute;left:662.37px;top:288px;width:7.20px;height:16.3px;border-right:1px solid #d2d2d2;"></div>
<div style="position:absolute;left:669.57px;top:288px;width:7.20px;height:16.3px;border-right:1px solid #d2d2d2;"></div>
<div style="position:absolute;left:676.76px;top:288px;width:7.20px;height:16.3px;border-right:1px solid #d2d2d2;"></div>
<div style="position:absolute;left:683.96px;top:288px;width:7.20px;height:16.3px;border-right:1px solid #d2d2d2;"></div>
<div style="position:absolute;left:691.16px;top:288px;width:7.20px;height:16.3px;border-right:1px solid #d2d2d2;"></div>
<div style="position:absolute;left:698.35px;top:288px;width:7.20px;height:16.3px;border-right:1px solid #d2d2d2;"></div>
<div style="position:absolute;left:705.55px;top:288px;width:7.20px;height:16.3px;border-right:1px solid #d2d2d2;"></div>
<div style="position:absolute;left:712.74px;top:288px;width:7.20px;height:16.3px;border-right:1px solid #d2d2d2;"></div>
<div style="position:absolute;left:719.94px;top:288px;width:7.20px;height:16.3px;border-right:1px solid #d2d2d2;"></div>
<div style="position:absolute;left:727.14px;top:288px;width:7.20px;height:16.3px;border-right:1px solid #d2d2d2;"></div>
<div style="position:absolute;left:734.33px;top:288px;width:7.20px;height:16.3px;border-right:1px solid #d2d2d2;"></div>
<div style="position:absolute;left:741.53px;top:288px;width:7.20px;height:16.3px;border-right:1px solid #d2d2d2;"></div>
<div style="position:absolute;left:748.72px;top:288px;width:7.20px;height:16.3px;border-right:1px solid #d2d2d2;"></div>
<div style="position:absolute;left:755.92px;top:288px;width:7.20px;height:16.3px;border-right:1px solid #d2d2d2;"></div>
<div style="position:absolute;left:763.12px;top:288px;width:7.20px;height:16.3px;border-right:1px solid #d2d2d2;"></div>
<div style="position:absolute;left:770.31px;top:288px;width:7.20px;height:16.3px;border-right:1px solid #d2d2d2;"></div>
<div style="position:absolute;left:777.51px;top:288px;width:7.20px;height:16.3px;border-right:1px solid #d2d2d2;"></div>
<div style="position:absolute;left:784.70px;top:288px;width:7.20px;height:16.3px;border-right:1px solid #d2d2d2;"></div>
<div style="position:absolute;left:791.90px;top:288px;width:7.20px;height:16.3px;border-right:1px solid #d2d2d2;"></div>
<div style="position:absolute;left:799.10px;top:288px;width:7.20px;height:16.3px;border-right:1px solid #d2d2d2;"></div>
<div style="position:absolute;left:806.30px;top:288px;width:7.20px;height:16.3px;border-right:1px solid #d2d2d2;"></div>
<div style="position:absolute;left:813.50px;top:288px;width:7.20px;height:16.3px;border-right:1px solid #d2d2d2;"></div>
<div style="position:absolute;left:820.70px;top:288px;width:7.20px;height:16.3px;border-right:1px solid #d2d2d2;"></div>
<div style="position:absolute;left:827.90px;top:288px;width:7.20px;height:16.3px;border-right:1px solid #d2d2d2;"></div>
<div style="position:absolute;left:835.10px;top:288px;width:7.20px;height:16.3px;border-right:1px solid #d2d2d2;"></div>
<div style="position:absolute;left:842.30px;top:288px;width:7.20px;height:16.3px;border-right:1px solid #d2d2d2;"></div>
<div style="position:absolute;left:849.50px;top:288px;width:7.20px;height:16.3px;border-right:1px solid #d2d2d2;"></div>
<div style="position:absolute;left:856.70px;top:288px;width:7.20px;height:16.3px;border-right:1px solid #d2d2d2;"></div>
<div style="position:absolute;left:863.90px;top:288px;width:7.20px;height:16.3px;border-right:1px solid #d2d2d2;"></div>
<div style="position:absolute;left:871.10px;top:288px;width:7.20px;height:16.3px;border-right:1px solid #d2d2d2;"></div>
<div style="position:absolute;left:878.30px;top:288px;width:7.20px;height:16.3px;border-right:1px solid #d2d2d2;"></div>
<div style="position:absolute;left:885.50px;top:288px;width:7.20px;height:16.3px;border-right:1px solid #d2d2d2;"></div>
<div style="position:absolute;left:892.70px;top:288px;width:7.20px;height:16.3px;border-right:1px solid #d2d2d2;"></div>
<div style="position:absolute;left:899.90px;top:288px;width:7.20px;height:16.3px;border-right:1px solid #d2d2d2;"></div>
<div style="position:absolute;left:907.10px;top:288px;width:7.20px;height:16.3px;border-right:1px solid #d2d2d2;"></div>
<div style="position:absolute;left:914.30px;top:288px;width:7.20px;height:16.3px;border-right:1px solid #d2d2d2;"></div>
<div style="position:absolute;left:921.50px;top:288px;width:7.20px;height:16.3px;border-right:1px solid #d2d2d2;"></div>
<div style="position:absolute;left:928.70px;top:288px;width:7.20px;height:16.3px;border-right:1px solid #d2d2d2;"></div>
<div style="position:absolute;left:935.90px;top:288px;width:7.20px;height:16.3px;border-right:1px solid #d2d2d2;"></div>
<div style="position:absolute;left:943.10px;top:288px;width:7.20px;height:16.3px;border-right:1px solid #d2d2d2;"></div>
<div style="position:absolute;left:950.30px;top:288px;width:7.20px;height:16.3px;border-right:1px solid #d2d2d2;"></div>
<div style="position:absolute;left:957.50px;top:288px;width:7.20px;height:16.3px;border-right:1px solid #d2d2d2;"></div>
<div style="position:absolute;left:964.70px;top:288px;width:7.20px;height:16.3px;border-right:1px solid #d2d2d2;"></div>
<div style="position:absolute;left:971.90px;top:288px;width:7.20px;height:16.3px;border-right:1px solid #d2d2d2;"></div>
<div style="position:absolute;left:979.10px;top:288px;width:14.20px;height:16.3px;border-right:1px solid #d2d2d2;"></div>
<div style="position:absolute;left:993.30px;top:288px;width:7.20px;height:16.3px;border-right:1px solid #d2d2d2;"></div>
<div style="position:absolute;left:1000.50px;top:288px;width:7.20px;height:16.3px;border-right:1px solid #d2d2d2;"></div>
<div style="position:absolute;left:1007.70px;top:288px;width:7.20px;height:16.3px;border-right:1px solid #d2d2d2;"></div>
<div style="position:absolute;left:1014.90px;top:288px;width:7.20px;height:16.3px;border-right:1px solid #d2d2d2;"></div>
<div style="position:absolute;left:1022.10px;top:288px;width:7.20px;height:16.3px;border-right:1px solid #d2d2d2;"></div>
<div style="position:absolute;left:1029.30px;top:288px;width:7.20px;height:16.3px;border-right:1px solid #d2d2d2;"></div>
<div style="position:absolute;left:1036.50px;top:288px;width:7.20px;height:16.3px;border-right:1px solid #d2d2d2;"></div>
<div style="position:absolute;left:1043.70px;top:288px;width:7.20px;height:16.3px;border-right:1px solid #d2d2d2;"></div>
<div style="position:absolute;left:1050.90px;top:288px;width:13.50px;height:16.3px;border-right:1px solid #d2d2d2;"></div>
<div style="position:absolute;left:1064.40px;top:288px;width:7.20px;height:16.3px;border-right:1px solid #d2d2d2;"></div>
<div style="position:absolute;left:1071.60px;top:288px;width:7.20px;height:16.3px;border-right:1px solid #d2d2d2;"></div>
<div style="position:absolute;left:1078.80px;top:288px;width:7.20px;height:16.3px;border-right:1px solid #d2d2d2;"></div>
<div style="position:absolute;left:1086.00px;top:288px;width:7.20px;height:16.3px;border-right:1px solid #d2d2d2;"></div>
<div style="position:absolute;left:1093.20px;top:288px;width:7.20px;height:16.3px;border-right:1px solid #d2d2d2;"></div>
<div style="position:absolute;left:1100.40px;top:288px;width:7.20px;height:16.3px;border-right:1px solid #d2d2d2;"></div>
<div style="position:absolute;left:1107.60px;top:288px;width:7.20px;height:16.3px;border-right:1px solid #d2d2d2;"></div>
<div style="position:absolute;left:1114.80px;top:288px;width:7.20px;height:16.3px;border-right:1px solid #d2d2d2;"></div>
<div style="position:absolute;left:1122.00px;top:288px;width:7.20px;height:16.3px;border-right:1px solid #d2d2d2;"></div>
<div style="position:absolute;left:1129.20px;top:288px;width:7.20px;height:16.3px;border-right:1px solid #d2d2d2;"></div>
<div style="position:absolute;left:1136.40px;top:288px;width:7.20px;height:16.3px;border-right:1px solid #d2d2d2;"></div>
<div style="position:absolute;left:1143.60px;top:288px;width:7.20px;height:16.3px;border-right:1px solid #d2d2d2;"></div>
<div style="position:absolute;left:1150.80px;top:288px;width:7.20px;height:16.3px;border-right:1px solid #d2d2d2;"></div>
<div style="position:absolute;left:1158.00px;top:288px;width:7.20px;height:16.3px;border-right:1px solid #d2d2d2;"></div>
<div style="position:absolute;left:1165.20px;top:288px;width:7.20px;height:16.3px;border-right:1px solid #d2d2d2;"></div>
<div style="position:absolute;left:1172.40px;top:288px;width:7.20px;height:16.3px;border-right:1px solid #d2d2d2;"></div>
<div style="position:absolute;left:1179.60px;top:288px;width:7.20px;height:16.3px;border-right:1px solid #d2d2d2;"></div>
<div style="position:absolute;left:1186.80px;top:288px;width:7.20px;height:16.3px;border-right:1px solid #d2d2d2;"></div>
<div style="position:absolute;left:1194.00px;top:288px;width:7.20px;height:16.3px;border-right:1px solid #d2d2d2;"></div>
<div style="position:absolute;left:1201.20px;top:288px;width:7.20px;height:16.3px;border-right:1px solid #d2d2d2;"></div>
<div style="position:absolute;left:1208.40px;top:288px;width:7.20px;height:16.3px;border-right:1px solid #d2d2d2;"></div>
<div style="position:absolute;left:1215.60px;top:288px;width:7.20px;height:16.3px;border-right:1px solid #d2d2d2;"></div>
<div style="position:absolute;left:1222.80px;top:288px;width:7.20px;height:16.3px;border-right:1px solid #d2d2d2;"></div>
<div style="position:absolute;left:1230.00px;top:288px;width:7.20px;height:16.3px;border-right:1px solid #d2d2d2;"></div>
<div style="position:absolute;left:1237.20px;top:288px;width:7.20px;height:16.3px;border-right:1px solid #d2d2d2;"></div>
<div style="position:absolute;left:1244.40px;top:288px;width:7.20px;height:16.3px;border-right:1px solid #d2d2d2;"></div>
<div style="position:absolute;left:1251.60px;top:288px;width:7.20px;height:16.3px;border-right:1px solid #d2d2d2;"></div>
<div style="position:absolute;left:1258.80px;top:288px;width:7.20px;height:16.3px;border-right:1px solid #d2d2d2;"></div>
<div style="position:absolute;left:1266.00px;top:288px;width:7.20px;height:16.3px;border-right:1px solid #d2d2d2;"></div>
<div style="position:absolute;left:1273.20px;top:288px;width:7.20px;height:16.3px;border-right:1px solid #d2d2d2;"></div>
<div style="position:absolute;left:1280.40px;top:288px;width:7.20px;height:16.3px;border-right:1px solid #d2d2d2;"></div>
<div style="position:absolute;left:1287.60px;top:288px;width:7.20px;height:16.3px;border-right:1px solid #d2d2d2;"></div>
<div style="position:absolute;left:1294.80px;top:288px;width:7.20px;height:16.3px;border-right:1px solid #d2d2d2;"></div>
<div style="position:absolute;left:1302.00px;top:288px;width:7.20px;height:16.3px;border-right:1px solid #d2d2d2;"></div>
<div style="position:absolute;left:1309.20px;top:288px;width:7.20px;height:16.3px;border-right:1px solid #d2d2d2;"></div>
<div style="position:absolute;left:1316.40px;top:288px;width:7.20px;height:16.3px;border-right:1px solid #d2d2d2;"></div>
<div style="position:absolute;left:1323.60px;top:288px;width:7.20px;height:16.3px;border-right:1px solid #d2d2d2;"></div>
<div style="position:absolute;left:1330.80px;top:288px;width:7.20px;height:16.3px;border-right:1px solid #d2d2d2;"></div>
<div style="position:absolute;left:602.00px;top:289.5px;width:27.20px;text-align:center;font:10.6px 'Liberation Sans', sans-serif;color:#222;white-space:pre">A</div>
<div style="position:absolute;left:609.20px;top:289.5px;width:27.20px;text-align:center;font:10.6px 'Liberation Sans', sans-serif;color:#222;white-space:pre">B</div>
<div style="position:absolute;left:616.39px;top:289.5px;width:27.20px;text-align:center;font:10.6px 'Liberation Sans', sans-serif;color:#222;white-space:pre">C</div>
<div style="position:absolute;left:623.59px;top:289.5px;width:27.20px;text-align:center;font:10.6px 'Liberation Sans', sans-serif;color:#222;white-space:pre">D</div>
<div style="position:absolute;left:630.78px;top:289.5px;width:27.20px;text-align:center;font:10.6px 'Liberation Sans', sans-serif;color:#222;white-space:pre">E</div>
<div style="position:absolute;left:637.98px;top:289.5px;width:27.20px;text-align:center;font:10.6px 'Liberation Sans', sans-serif;color:#222;white-space:pre">F</div>
<div style="position:absolute;left:645.18px;top:289.5px;width:27.20px;text-align:center;font:10.6px 'Liberation Sans', sans-serif;color:#222;white-space:pre">G</div>
<div style="position:absolute;left:652.37px;top:289.5px;width:27.20px;text-align:center;font:10.6px 'Liberation Sans', sans-serif;color:#222;white-space:pre">H</div>
<div style="position:absolute;left:659.57px;top:289.5px;width:27.20px;text-align:center;font:10.6px 'Liberation Sans', sans-serif;color:#222;white-space:pre">I</div>
<div style="position:absolute;left:666.76px;top:289.5px;width:27.20px;text-align:center;font:10.6px 'Liberation Sans', sans-serif;color:#222;white-space:pre">J</div>
<div style="position:absolute;left:673.96px;top:289.5px;width:27.20px;text-align:center;font:10.6px 'Liberation Sans', sans-serif;color:#222;white-space:pre">K</div>
<div style="position:absolute;left:681.16px;top:289.5px;width:27.20px;text-align:center;font:10.6px 'Liberation Sans', sans-serif;color:#222;white-space:pre">L</div>
<div style="position:absolute;left:688.35px;top:289.5px;width:27.20px;text-align:center;font:10.6px 'Liberation Sans', sans-serif;color:#222;white-space:pre">M</div>
<div style="position:absolute;left:695.55px;top:289.5px;width:27.20px;text-align:center;font:10.6px 'Liberation Sans', sans-serif;color:#222;white-space:pre">N</div>
<div style="position:absolute;left:702.74px;top:289.5px;width:27.20px;text-align:center;font:10.6px 'Liberation Sans', sans-serif;color:#222;white-space:pre">O</div>
<div style="position:absolute;left:709.94px;top:289.5px;width:27.20px;text-align:center;font:10.6px 'Liberation Sans', sans-serif;color:#222;white-space:pre">P</div>
<div style="position:absolute;left:717.14px;top:289.5px;width:27.20px;text-align:center;font:10.6px 'Liberation Sans', sans-serif;color:#222;white-space:pre">Q</div>
<div style="position:absolute;left:724.33px;top:289.5px;width:27.20px;text-align:center;font:10.6px 'Liberation Sans', sans-serif;color:#222;white-space:pre">R</div>
<div style="position:absolute;left:731.53px;top:289.5px;width:27.20px;text-align:center;font:10.6px 'Liberation Sans', sans-serif;color:#222;white-space:pre">S</div>
<div style="position:absolute;left:738.72px;top:289.5px;width:27.20px;text-align:center;font:10.6px 'Liberation Sans', sans-serif;color:#222;white-space:pre">T</div>
<div style="position:absolute;left:745.92px;top:289.5px;width:27.20px;text-align:center;font:10.6px 'Liberation Sans', sans-serif;color:#222;white-space:pre">U</div>
<div style="position:absolute;left:753.12px;top:289.5px;width:27.20px;text-align:center;font:10.6px 'Liberation Sans', sans-serif;color:#222;white-space:pre">V</div>
<div style="position:absolute;left:760.31px;top:289.5px;width:27.20px;text-align:center;font:10.6px 'Liberation Sans', sans-serif;color:#222;white-space:pre">W</div>
<div style="position:absolute;left:767.51px;top:289.5px;width:27.20px;text-align:center;font:10.6px 'Liberation Sans', sans-serif;color:#222;white-space:pre">X</div>
<div style="position:absolute;left:774.70px;top:289.5px;width:27.20px;text-align:center;font:10.6px 'Liberation Sans', sans-serif;color:#222;white-space:pre">Y</div>
<div style="position:absolute;left:781.90px;top:289.5px;width:27.20px;text-align:center;font:10.6px 'Liberation Sans', sans-serif;color:#222;white-space:pre">Z</div>
<div style="position:absolute;left:789.10px;top:289.5px;width:27.20px;text-align:center;font:10.6px 'Liberation Sans', sans-serif;color:#222;white-space:pre">A</div>
<div style="position:absolute;left:796.30px;top:289.5px;width:27.20px;text-align:center;font:10.6px 'Liberation Sans', sans-serif;color:#222;white-space:pre">A</div>
<div style="position:absolute;left:803.50px;top:289.5px;width:27.20px;text-align:center;font:10.6px 'Liberation Sans', sans-serif;color:#222;white-space:pre">A</div>
<div style="position:absolute;left:810.70px;top:289.5px;width:27.20px;text-align:center;font:10.6px 'Liberation Sans', sans-serif;color:#222;white-space:pre">A</div>
<div style="position:absolute;left:817.90px;top:289.5px;width:27.20px;text-align:center;font:10.6px 'Liberation Sans', sans-serif;color:#222;white-space:pre">A</div>
<div style="position:absolute;left:825.10px;top:289.5px;width:27.20px;text-align:center;font:10.6px 'Liberation Sans', sans-serif;color:#222;white-space:pre">A</div>
<div style="position:absolute;left:832.30px;top:289.5px;width:27.20px;text-align:center;font:10.6px 'Liberation Sans', sans-serif;color:#222;white-space:pre">A</div>
<div style="position:absolute;left:839.50px;top:289.5px;width:27.20px;text-align:center;font:10.6px 'Liberation Sans', sans-serif;color:#222;white-space:pre">A</div>
<div style="position:absolute;left:846.70px;top:289.5px;width:27.20px;text-align:center;font:10.6px 'Liberation Sans', sans-serif;color:#222;white-space:pre">A</div>
<div style="position:absolute;left:853.90px;top:289.5px;width:27.20px;text-align:center;font:10.6px 'Liberation Sans', sans-serif;color:#222;white-space:pre">A</div>
<div style="position:absolute;left:861.10px;top:289.5px;width:27.20px;text-align:center;font:10.6px 'Liberation Sans', sans-serif;color:#222;white-space:pre">A</div>
<div style="position:absolute;left:868.30px;top:289.5px;width:27.20px;text-align:center;font:10.6px 'Liberation Sans', sans-serif;color:#222;white-space:pre">A</div>
<div style="position:absolute;left:875.50px;top:289.5px;width:27.20px;text-align:center;font:10.6px 'Liberation Sans', sans-serif;color:#222;white-space:pre">A</div>
<div style="position:absolute;left:882.70px;top:289.5px;width:27.20px;text-align:center;font:10.6px 'Liberation Sans', sans-serif;color:#222;white-space:pre">A</div>
<div style="position:absolute;left:889.90px;top:289.5px;width:27.20px;text-align:center;font:10.6px 'Liberation Sans', sans-serif;color:#222;white-space:pre">A</div>
<div style="position:absolute;left:897.10px;top:289.5px;width:27.20px;text-align:center;font:10.6px 'Liberation Sans', sans-serif;color:#222;white-space:pre">A</div>
<div style="position:absolute;left:904.30px;top:289.5px;width:27.20px;text-align:center;font:10.6px 'Liberation Sans', sans-serif;color:#222;white-space:pre">A</div>
<div style="position:absolute;left:911.50px;top:289.5px;width:27.20px;text-align:center;font:10.6px 'Liberation Sans', sans-serif;color:#222;white-space:pre">A</div>
<div style="position:absolute;left:918.70px;top:289.5px;width:27.20px;text-align:center;font:10.6px 'Liberation Sans', sans-serif;color:#222;white-space:pre">A</div>
<div style="position:absolute;left:925.90px;top:289.5px;width:27.20px;text-align:center;font:10.6px 'Liberation Sans', sans-serif;color:#222;white-space:pre">A</div>
<div style="position:absolute;left:933.10px;top:289.5px;width:27.20px;text-align:center;font:10.6px 'Liberation Sans', sans-serif;color:#222;white-space:pre">A</div>
<div style="position:absolute;left:940.30px;top:289.5px;width:27.20px;text-align:center;font:10.6px 'Liberation Sans', sans-serif;color:#222;white-space:pre">A</div>
<div style="position:absolute;left:947.50px;top:289.5px;width:27.20px;text-align:center;font:10.6px 'Liberation Sans', sans-serif;color:#222;white-space:pre">A</div>
<div style="position:absolute;left:954.70px;top:289.5px;width:27.20px;text-align:center;font:10.6px 'Liberation Sans', sans-serif;color:#222;white-space:pre">A</div>
<div style="position:absolute;left:961.90px;top:289.5px;width:27.20px;text-align:center;font:10.6px 'Liberation Sans', sans-serif;color:#222;white-space:pre">A</div>
<div style="position:absolute;left:969.10px;top:289.5px;width:34.20px;text-align:center;font:10.6px 'Liberation Sans', sans-serif;color:#222;white-space:pre">AZ</div>
<div style="position:absolute;left:983.30px;top:289.5px;width:27.20px;text-align:center;font:10.6px 'Liberation Sans', sans-serif;color:#222;white-space:pre">B</div>
<div style="position:absolute;left:990.50px;top:289.5px;width:27.20px;text-align:center;font:10.6px 'Liberation Sans', sans-serif;color:#222;white-space:pre">B</div>
<div style="position:absolute;left:997.70px;top:289.5px;width:27.20px;text-align:center;font:10.6px 'Liberation Sans', sans-serif;color:#222;white-space:pre">B</div>
<div style="position:absolute;left:1004.90px;top:289.5px;width:27.20px;text-align:center;font:10.6px 'Liberation Sans', sans-serif;color:#222;white-space:pre">B</div>
<div style="position:absolute;left:1012.10px;top:289.5px;width:27.20px;text-align:center;font:10.6px 'Liberation Sans', sans-serif;color:#222;white-space:pre">B</div>
<div style="position:absolute;left:1019.30px;top:289.5px;width:27.20px;text-align:center;font:10.6px 'Liberation Sans', sans-serif;color:#222;white-space:pre">B</div>
<div style="position:absolute;left:1026.50px;top:289.5px;width:27.20px;text-align:center;font:10.6px 'Liberation Sans', sans-serif;color:#222;white-space:pre">B</div>
<div style="position:absolute;left:1033.70px;top:289.5px;width:27.20px;text-align:center;font:10.6px 'Liberation Sans', sans-serif;color:#222;white-space:pre">B</div>
<div style="position:absolute;left:1040.90px;top:289.5px;width:33.50px;text-align:center;font:10.6px 'Liberation Sans', sans-serif;color:#222;white-space:pre">BI</div>
<div style="position:absolute;left:1054.40px;top:289.5px;width:27.20px;text-align:center;font:10.6px 'Liberation Sans', sans-serif;color:#222;white-space:pre">B</div>
<div style="position:absolute;left:1061.60px;top:289.5px;width:27.20px;text-align:center;font:10.6px 'Liberation Sans', sans-serif;color:#222;white-space:pre">B</div>
<div style="position:absolute;left:1068.80px;top:289.5px;width:27.20px;text-align:center;font:10.6px 'Liberation Sans', sans-serif;color:#222;white-space:pre">B</div>
<div style="position:absolute;left:1076.00px;top:289.5px;width:27.20px;text-align:center;font:10.6px 'Liberation Sans', sans-serif;color:#222;white-space:pre">B</div>
<div style="position:absolute;left:1083.20px;top:289.5px;width:27.20px;text-align:center;font:10.6px 'Liberation Sans', sans-serif;color:#222;white-space:pre">B</div>
<div style="position:absolute;left:1090.40px;top:289.5px;width:27.20px;text-align:center;font:10.6px 'Liberation Sans', sans-serif;color:#222;white-space:pre">B</div>
<div style="position:absolute;left:1097.60px;top:289.5px;width:27.20px;text-align:center;font:10.6px 'Liberation Sans', sans-serif;color:#222;white-space:pre">B</div>
<div style="position:absolute;left:1104.80px;top:289.5px;width:27.20px;text-align:center;font:10.6px 'Liberation Sans', sans-serif;color:#222;white-space:pre">B</div>
<div style="position:absolute;left:1112.00px;top:289.5px;width:27.20px;text-align:center;font:10.6px 'Liberation Sans', sans-serif;color:#222;white-space:pre">B</div>
<div style="position:absolute;left:1119.20px;top:289.5px;width:27.20px;text-align:center;font:10.6px 'Liberation Sans', sans-serif;color:#222;white-space:pre">B</div>
<div style="position:absolute;left:1126.40px;top:289.5px;width:27.20px;text-align:center;font:10.6px 'Liberation Sans', sans-serif;color:#222;white-space:pre">B</div>
<div style="position:absolute;left:1133.60px;top:289.5px;width:27.20px;text-align:center;font:10.6px 'Liberation Sans', sans-serif;color:#222;white-space:pre">B</div>
<div style="position:absolute;left:1140.80px;top:289.5px;width:27.20px;text-align:center;font:10.6px 'Liberation Sans', sans-serif;color:#222;white-space:pre">B</div>
<div style="position:absolute;left:1148.00px;top:289.5px;width:27.20px;text-align:center;font:10.6px 'Liberation Sans', sans-serif;color:#222;white-space:pre">B</div>
<div style="position:absolute;left:1155.20px;top:289.5px;width:27.20px;text-align:center;font:10.6px 'Liberation Sans', sans-serif;color:#222;white-space:pre">B</div>
<div style="position:absolute;left:1162.40px;top:289.5px;width:27.20px;text-align:center;font:10.6px 'Liberation Sans', sans-serif;color:#222;white-space:pre">B</div>
<div style="position:absolute;left:1169.60px;top:289.5px;width:27.20px;text-align:center;font:10.6px 'Liberation Sans', sans-serif;color:#222;white-space:pre">B</div>
<div style="position:absolute;left:1176.80px;top:289.5px;width:27.20px;text-align:center;font:10.6px 'Liberation Sans', sans-serif;color:#222;white-space:pre">C</div>
<div style="position:absolute;left:1184.00px;top:289.5px;width:27.20px;text-align:center;font:10.6px 'Liberation Sans', sans-serif;color:#222;white-space:pre">C</div>
<div style="position:absolute;left:1191.20px;top:289.5px;width:27.20px;text-align:center;font:10.6px 'Liberation Sans', sans-serif;color:#222;white-space:pre">C</div>
<div style="position:absolute;left:1198.40px;top:289.5px;width:27.20px;text-align:center;font:10.6px 'Liberation Sans', sans-serif;color:#222;white-space:pre">C</div>
<div style="position:absolute;left:1205.60px;top:289.5px;width:27.20px;text-align:center;font:10.6px 'Liberation Sans', sans-serif;color:#222;white-space:pre">C</div>
<div style="position:absolute;left:1212.80px;top:289.5px;width:27.20px;text-align:center;font:10.6px 'Liberation Sans', sans-serif;color:#222;white-space:pre">C</div>
<div style="position:absolute;left:1220.00px;top:289.5px;width:27.20px;text-align:center;font:10.6px 'Liberation Sans', sans-serif;color:#222;white-space:pre">C</div>
<div style="position:absolute;left:1227.20px;top:289.5px;width:27.20px;text-align:center;font:10.6px 'Liberation Sans', sans-serif;color:#222;white-space:pre">C</div>
<div style="position:absolute;left:1234.40px;top:289.5px;width:27.20px;text-align:center;font:10.6px 'Liberation Sans', sans-serif;color:#222;white-space:pre">C</div>
<div style="position:absolute;left:1241.60px;top:289.5px;width:27.20px;text-align:center;font:10.6px 'Liberation Sans', sans-serif;color:#222;white-space:pre">C</div>
<div style="position:absolute;left:1248.80px;top:289.5px;width:27.20px;text-align:center;font:10.6px 'Liberation Sans', sans-serif;color:#222;white-space:pre">C</div>
<div style="position:absolute;left:1256.00px;top:289.5px;width:27.20px;text-align:center;font:10.6px 'Liberation Sans', sans-serif;color:#222;white-space:pre">C</div>
<div style="position:absolute;left:1263.20px;top:289.5px;width:27.20px;text-align:center;font:10.6px 'Liberation Sans', sans-serif;color:#222;white-space:pre">C</div>
<div style="position:absolute;left:1270.40px;top:289.5px;width:27.20px;text-align:center;font:10.6px 'Liberation Sans', sans-serif;color:#222;white-space:pre">C</div>
<div style="position:absolute;left:1277.60px;top:289.5px;width:27.20px;text-align:center;font:10.6px 'Liberation Sans', sans-serif;color:#222;white-space:pre">C</div>
<div style="position:absolute;left:1284.80px;top:289.5px;width:27.20px;text-align:center;font:10.6px 'Liberation Sans', sans-serif;color:#222;white-space:pre">C</div>
<div style="position:absolute;left:1292.00px;top:289.5px;width:27.20px;text-align:center;font:10.6px 'Liberation Sans', sans-serif;color:#222;white-space:pre">C</div>
<div style="position:absolute;left:1299.20px;top:289.5px;width:27.20px;text-align:center;font:10.6px 'Liberation Sans', sans-serif;color:#222;white-space:pre">C</div>
<div style="position:absolute;left:1306.40px;top:289.5px;width:27.20px;text-align:center;font:10.6px 'Liberation Sans', sans-serif;color:#222;white-space:pre">C</div>
<div style="position:absolute;left:1313.60px;top:289.5px;width:27.20px;text-align:center;font:10.6px 'Liberation Sans', sans-serif;color:#222;white-space:pre">C</div>
<div style="position:absolute;left:1320.80px;top:289.5px;width:27.20px;text-align:center;font:10.6px 'Liberation Sans', sans-serif;color:#222;white-space:pre">C</div>
</div>
<div style="position:absolute;left:1330.5px;top:287.5px;width:16px;height:600px;background:#f1f1f1;border-left:1px solid #d4d4d4"></div>
<svg style="left:1334px;top:293px" width="9" height="6" viewBox="0 0 9 6"><path d="M0 5.5 L4.5 0.5 L9 5.5Z" fill="#a3a3a3"/></svg>
<div style="position:absolute;left:1331.5px;top:305px;width:13px;height:246.8px;background:#c1c1c1"></div>
<div style="position:absolute;left:594px;top:305px;width:17px;height:554px;background:#fff"></div>
<div style="position:absolute;left:594px;top:305px;width:17px;height:33.5px;background:#e4e4e4"></div>
<div style="position:absolute;left:594px;top:338.0px;width:17px;height:1px;background:#d0d0d0"></div>
<div style="position:absolute;left:593px;top:314.9px;width:18px;text-align:center;font:11px 'Liberation Sans', sans-serif;color:#1a1a1a">1</div>
<div style="position:absolute;left:594px;top:354.5px;width:17px;height:1px;background:#d0d0d0"></div>
<div style="position:absolute;left:593px;top:339.9px;width:18px;text-align:center;font:11px 'Liberation Sans', sans-serif;color:#1a1a1a">2</div>
<div style="position:absolute;left:594px;top:368.7px;width:17px;height:1px;background:#d0d0d0"></div>
<div style="position:absolute;left:593px;top:355.3px;width:18px;text-align:center;font:11px 'Liberation Sans', sans-serif;color:#1a1a1a">3</div>
<div style="position:absolute;left:594px;top:383.3px;width:17px;height:1px;background:#d0d0d0"></div>
<div style="position:absolute;left:593px;top:369.7px;width:18px;text-align:center;font:11px 'Liberation Sans', sans-serif;color:#1a1a1a">4</div>
<div style="position:absolute;left:594px;top:418.0px;width:17px;height:1px;background:#d0d0d0"></div>
<div style="position:absolute;left:593px;top:394.3px;width:18px;text-align:center;font:11px 'Liberation Sans', sans-serif;color:#1a1a1a">5</div>
<div style="position:absolute;left:594px;top:532.9px;width:17px;height:1px;background:#d0d0d0"></div>
<div style="position:absolute;left:593px;top:469.1px;width:18px;text-align:center;font:11px 'Liberation Sans', sans-serif;color:#1a1a1a">6</div>
<div style="position:absolute;left:594px;top:546.0px;width:17px;height:1px;background:#d0d0d0"></div>
<div style="position:absolute;left:593px;top:533.2px;width:18px;text-align:center;font:11px 'Liberation Sans', sans-serif;color:#1a1a1a">7</div>
<div style="position:absolute;left:594px;top:562.0px;width:17px;height:1px;background:#d0d0d0"></div>
<div style="position:absolute;left:593px;top:547.7px;width:18px;text-align:center;font:11px 'Liberation Sans', sans-serif;color:#1a1a1a">8</div>
<div style="position:absolute;left:594px;top:624.7px;width:17px;height:1px;background:#d0d0d0"></div>
<div style="position:absolute;left:593px;top:587.1px;width:18px;text-align:center;font:11px 'Liberation Sans', sans-serif;color:#1a1a1a">9</div>
<div style="position:absolute;left:594px;top:640.7px;width:17px;height:1px;background:#d0d0d0"></div>
<div style="position:absolute;left:593px;top:626.4px;width:18px;text-align:center;font:11px 'Liberation Sans', sans-serif;color:#1a1a1a">10</div>
<div style="position:absolute;left:594px;top:668.8px;width:17px;height:1px;background:#d0d0d0"></div>
<div style="position:absolute;left:593px;top:648.5px;width:18px;text-align:center;font:11px 'Liberation Sans', sans-serif;color:#1a1a1a">11</div>
<div style="position:absolute;left:594px;top:717.8px;width:17px;height:1px;background:#d0d0d0"></div>
<div style="position:absolute;left:593px;top:687.0px;width:18px;text-align:center;font:11px 'Liberation Sans', sans-serif;color:#1a1a1a">12</div>
<div style="position:absolute;left:594px;top:733.9px;width:17px;height:1px;background:#d0d0d0"></div>
<div style="position:absolute;left:593px;top:719.5px;width:18px;text-align:center;font:11px 'Liberation Sans', sans-serif;color:#1a1a1a">13</div>
<div style="position:absolute;left:594px;top:752.0px;width:17px;height:1px;background:#d0d0d0"></div>
<div style="position:absolute;left:593px;top:736.7px;width:18px;text-align:center;font:11px 'Liberation Sans', sans-serif;color:#1a1a1a">14</div>
<div style="position:absolute;left:594px;top:782.9px;width:17px;height:1px;background:#d0d0d0"></div>
<div style="position:absolute;left:593px;top:761.2px;width:18px;text-align:center;font:11px 'Liberation Sans', sans-serif;color:#1a1a1a">15</div>
<div style="position:absolute;left:594px;top:798.9px;width:17px;height:1px;background:#d0d0d0"></div>
<div style="position:absolute;left:593px;top:784.6px;width:18px;text-align:center;font:11px 'Liberation Sans', sans-serif;color:#1a1a1a">16</div>
<div style="position:absolute;left:594px;top:831.8px;width:17px;height:1px;background:#d0d0d0"></div>
<div style="position:absolute;left:593px;top:809.0px;width:18px;text-align:center;font:11px 'Liberation Sans', sans-serif;color:#1a1a1a">17</div>
<div style="position:absolute;left:594px;top:856.1px;width:17px;height:1px;background:#d0d0d0"></div>
<div style="position:absolute;left:593px;top:837.7px;width:18px;text-align:center;font:11px 'Liberation Sans', sans-serif;color:#1a1a1a">18</div>
<div style="position:absolute;left:594px;top:879.5px;width:17px;height:1px;background:#d0d0d0"></div>
<div style="position:absolute;left:593px;top:861.5px;width:18px;text-align:center;font:11px 'Liberation Sans', sans-serif;color:#1a1a1a">19</div>
<div style="position:absolute;left:619.2px;top:305px;width:1.2px;height:33.5px;background:#23877a;z-index:6"></div>
<div style="position:absolute;left:611.5px;top:338px;width:6px;height:1px;background:#23877a;z-index:6"></div>
<div style="position:absolute;left:617px;top:337px;width:4.2px;height:4px;background:#23877a;z-index:6"></div>
<div style="position:absolute;left:915.8px;top:304.83px;white-space:nowrap;font:normal 10.6px/12.19px 'Liberation Serif', serif;color:#000;text-align:left;z-index:7;-webkit-text-stroke:0.1px #000;">Додаток 6</div>
<div style="position:absolute;left:915.8px;top:316.13px;white-space:nowrap;font:normal 10.6px/12.19px 'Liberation Serif', serif;color:#000;text-align:left;z-index:7;-webkit-text-stroke:0.1px #000;">до декларації акцизного податку</div>
<div style="position:absolute;left:612px;top:338px;width:245px;height:1px;background:#000;z-index:7"></div>
<div style="position:absolute;left:612px;top:355px;width:245px;height:1px;background:#000;z-index:7"></div>
<div style="position:absolute;left:612px;top:338px;width:1px;height:18px;background:#000;z-index:7"></div>
<div style="position:absolute;left:698px;top:338px;width:1px;height:18px;background:#000;z-index:7"></div>
<div style="position:absolute;left:741px;top:338px;width:1px;height:18px;background:#000;z-index:7"></div>
<div style="position:absolute;left:813px;top:338px;width:1px;height:18px;background:#000;z-index:7"></div>
<div style="position:absolute;left:856px;top:338px;width:1px;height:18px;background:#000;z-index:7"></div>
<div style="position:absolute;left:864px;top:338px;width:87px;height:1px;background:#000;z-index:7"></div>
<div style="position:absolute;left:864px;top:355px;width:87px;height:1px;background:#000;z-index:7"></div>
<div style="position:absolute;left:864px;top:338px;width:1px;height:18px;background:#000;z-index:7"></div>
<div style="position:absolute;left:892px;top:338px;width:1px;height:18px;background:#000;z-index:7"></div>
<div style="position:absolute;left:950px;top:338px;width:1px;height:18px;background:#000;z-index:7"></div>
<svg style="left:887px;top:339px;z-index:8" width="5" height="5" viewBox="0 0 5 5"><path d="M0 0 H5 V5Z" fill="#f00"/></svg>
<svg style="left:945px;top:339px;z-index:8" width="5" height="5" viewBox="0 0 5 5"><path d="M0 0 H5 V5Z" fill="#f00"/></svg>
<div style="position:absolute;left:615.7px;top:340.15px;white-space:nowrap;font:normal 10.9px/12.54px 'Liberation Serif', serif;color:#000;text-align:left;z-index:7;-webkit-text-stroke:0.1px #000;">Розділ</div>
<div style="position:absolute;left:698px;top:339.65px;width:43px;white-space:nowrap;font:bold 10.9px/12.54px 'Liberation Serif', serif;color:#000;text-align:center;z-index:7;-webkit-text-stroke:0.1px #000;">Д</div>
<div style="position:absolute;left:745.8px;top:339.65px;white-space:nowrap;font:normal 10.9px/12.54px 'Liberation Serif', serif;color:#000;text-align:left;z-index:7;-webkit-text-stroke:0.1px #000;">Код операції</div>
<div style="position:absolute;left:813px;top:339.65px;width:43px;white-space:nowrap;font:normal 10.9px/12.54px 'Liberation Serif', serif;color:#000;text-align:center;z-index:7;-webkit-text-stroke:0.1px #000;">Д1.3</div>
<div style="position:absolute;left:864px;top:339.65px;width:28px;white-space:nowrap;font:normal 10.9px/12.54px 'Liberation Serif', serif;color:#000;text-align:center;z-index:7;-webkit-text-stroke:0.1px #000;">1</div>
<div style="position:absolute;left:892px;top:339.65px;width:58px;white-space:nowrap;font:normal 10.9px/12.54px 'Liberation Serif', serif;color:#000;text-align:center;z-index:7;-webkit-text-stroke:0.1px #000;">2023</div>
<div style="position:absolute;left:613.4px;top:354.84px;white-space:nowrap;font:normal 9.6px/11.04px 'Liberation Serif', serif;color:#000;text-align:left;z-index:7;-webkit-text-stroke:0.1px #000;">(розділ декларації акцизного податку, код операції, звітний період (місяць, рік))</div>
<div style="position:absolute;left:612px;top:369px;width:353px;height:1px;background:#000;z-index:7"></div>
<div style="position:absolute;left:612px;top:383px;width:353px;height:1px;background:#000;z-index:7"></div>
<div style="position:absolute;left:612px;top:369px;width:1px;height:15px;background:#000;z-index:7"></div>
<div style="position:absolute;left:820px;top:369px;width:1px;height:15px;background:#000;z-index:7"></div>
<div style="position:absolute;left:964px;top:369px;width:1px;height:15px;background:#000;z-index:7"></div>
<div style="position:absolute;left:613.6px;top:368.73px;white-space:nowrap;font:normal 10.6px/12.19px 'Liberation Serif', serif;color:#000;text-align:left;z-index:7;-webkit-text-stroke:0.1px #000;">Код території</div>
<div style="position:absolute;left:820px;top:370.13px;width:144px;white-space:nowrap;font:normal 9.5px/10.92px 'Liberation Serif', serif;color:#000;text-align:center;z-index:7;-webkit-text-stroke:0.1px #000;">UA46020030010069501</div>
<div style="position:absolute;left:612px;top:384.48px;width:548px;white-space:nowrap;font:bold 12.73px/14.64px 'Liberation Serif', serif;color:#000;text-align:center;z-index:7;-webkit-text-stroke:0.1px #000;">Розрахунок суми акцизного податку</div>
<div style="position:absolute;left:612px;top:398.98px;width:548px;white-space:nowrap;font:bold 12.73px/14.64px 'Liberation Serif', serif;color:#000;text-align:center;z-index:7;-webkit-text-stroke:0.1px #000;">з реалізації суб’єктами господарювання роздрібної торгівлі підакцизних товарів</div>
<div style="position:absolute;left:612px;top:418px;width:549px;height:1px;background:#000;z-index:7"></div>
<div style="position:absolute;left:612px;top:533px;width:549px;height:1px;background:#000;z-index:7"></div>
<div style="position:absolute;left:612px;top:546px;width:549px;height:1px;background:#000;z-index:7"></div>
<div style="position:absolute;left:612px;top:562px;width:549px;height:1px;background:#000;z-index:7"></div>
<div style="position:absolute;left:612px;top:625px;width:549px;height:1px;background:#000;z-index:7"></div>
<div style="position:absolute;left:612px;top:641px;width:549px;height:1px;background:#000;z-index:7"></div>
<div style="position:absolute;left:612px;top:669px;width:549px;height:1px;background:#000;z-index:7"></div>
<div style="position:absolute;left:612px;top:718px;width:549px;height:1px;background:#000;z-index:7"></div>
<div style="position:absolute;left:612px;top:734px;width:549px;height:1px;background:#000;z-index:7"></div>
<div style="position:absolute;left:612px;top:418px;width:1px;height:317px;background:#000;z-index:7"></div>
<div style="position:absolute;left:633px;top:418px;width:1px;height:301px;background:#000;z-index:7"></div>
<div style="position:absolute;left:777px;top:418px;width:1px;height:301px;background:#000;z-index:7"></div>
<div style="position:absolute;left:979px;top:418px;width:1px;height:301px;background:#000;z-index:7"></div>
<div style="position:absolute;left:1052px;top:418px;width:1px;height:317px;background:#000;z-index:7"></div>
<div style="position:absolute;left:1160px;top:418px;width:1px;height:317px;background:#000;z-index:7"></div>
<div style="position:absolute;left:612px;top:417.42px;width:21px;white-space:nowrap;font:normal 10.6px/11px 'Liberation Serif', serif;color:#000;text-align:center;z-index:7;-webkit-text-stroke:0.1px #000;">N<br>з/п</div>
<div style="position:absolute;left:633px;top:417.82px;width:144px;white-space:nowrap;font:normal 10.6px/11px 'Liberation Serif', serif;color:#000;text-align:center;z-index:7;-webkit-text-stroke:0.1px #000;">Вид підакцизних товарів</div>
<div style="position:absolute;left:777px;top:417.67px;width:202px;white-space:nowrap;font:normal 10.6px/10.9px 'Liberation Serif', serif;color:#000;text-align:center;z-index:7;-webkit-text-stroke:0.1px #000;">Вартість<br>(з податком на додану вартість та без<br>урахування акцизного податку з реалізації<br>суб’єктами господарювання роздрібної<br>торгівлі підакцизних товарів) підакцизних<br>товарів, що реалізовані у роздрібній<br>торговельній мережі та у мережі<br>громадського харчування<br>(грн)</div>
<div style="position:absolute;left:979px;top:417.67px;width:73px;white-space:nowrap;font:normal 10.6px/10.9px 'Liberation Serif', serif;color:#000;text-align:center;z-index:7;-webkit-text-stroke:0.1px #000;">Ставка податку<br>(%)</div>
<div style="position:absolute;left:1052px;top:417.67px;width:108px;white-space:nowrap;font:normal 10.6px/10.9px 'Liberation Serif', serif;color:#000;text-align:center;z-index:7;-webkit-text-stroke:0.1px #000;">Сума податкового<br>зобов’язання, що<br>підлягає сплаті до<br>бюджету<br>(грн)<br>(гр. 3 х гр. 4) / 100</div>
<div style="position:absolute;left:612px;top:533.83px;width:21px;white-space:nowrap;font:normal 10.6px/12.19px 'Liberation Serif', serif;color:#000;text-align:center;z-index:7;-webkit-text-stroke:0.1px #000;">1</div>
<div style="position:absolute;left:633px;top:533.83px;width:144px;white-space:nowrap;font:normal 10.6px/12.19px 'Liberation Serif', serif;color:#000;text-align:center;z-index:7;-webkit-text-stroke:0.1px #000;">2</div>
<div style="position:absolute;left:777px;top:533.83px;width:202px;white-space:nowrap;font:normal 10.6px/12.19px 'Liberation Serif', serif;color:#000;text-align:center;z-index:7;-webkit-text-stroke:0.1px #000;">3</div>
<div style="position:absolute;left:979px;top:533.83px;width:73px;white-space:nowrap;font:normal 10.6px/12.19px 'Liberation Serif', serif;color:#000;text-align:center;z-index:7;-webkit-text-stroke:0.1px #000;">4</div>
<div style="position:absolute;left:1052px;top:533.83px;width:108px;white-space:nowrap;font:normal 10.6px/12.19px 'Liberation Serif', serif;color:#000;text-align:center;z-index:7;-webkit-text-stroke:0.1px #000;">5</div>
<div style="position:absolute;left:612px;top:547.83px;width:21px;white-space:nowrap;font:normal 11.8px/13.57px 'Liberation Serif', serif;color:#000;text-align:center;z-index:7;-webkit-text-stroke:0.1px #000;transform:scaleX(0.8)">1.1</div>
<div style="position:absolute;left:612px;top:587.33px;width:21px;white-space:nowrap;font:normal 11.8px/13.57px 'Liberation Serif', serif;color:#000;text-align:center;z-index:7;-webkit-text-stroke:0.1px #000;transform:scaleX(0.8)">1.2</div>
<div style="position:absolute;left:612px;top:626.83px;width:21px;white-space:nowrap;font:normal 11.8px/13.57px 'Liberation Serif', serif;color:#000;text-align:center;z-index:7;-webkit-text-stroke:0.1px #000;transform:scaleX(0.8)">1.3</div>
<div style="position:absolute;left:612px;top:648.83px;width:21px;white-space:nowrap;font:normal 11.8px/13.57px 'Liberation Serif', serif;color:#000;text-align:center;z-index:7;-webkit-text-stroke:0.1px #000;transform:scaleX(0.8)">1.4</div>
<div style="position:absolute;left:612px;top:687.33px;width:21px;white-space:nowrap;font:normal 11.8px/13.57px 'Liberation Serif', serif;color:#000;text-align:center;z-index:7;-webkit-text-stroke:0.1px #000;transform:scaleX(0.8)">1.5</div>
<div style="position:absolute;left:634.7px;top:545.93px;white-space:nowrap;font:normal 10.6px/12.19px 'Liberation Serif', serif;color:#000;text-align:left;z-index:7;-webkit-text-stroke:0.1px #000;">Лікеро-горілчана продукція</div>
<div style="position:absolute;left:634.7px;top:563.00px;white-space:nowrap;font:normal 10.6px/10.85px 'Liberation Serif', serif;color:#000;text-align:left;z-index:7;-webkit-text-stroke:0.1px #000;">Виноробна продукція, інші<br>спиртові дистиляти, продукти<br>з вмістом спирту етилового 8,5<br>відсотка об’ємних одиниць та<br>більше</div>
<div style="position:absolute;left:634.7px;top:624.53px;white-space:nowrap;font:normal 10.6px/12.19px 'Liberation Serif', serif;color:#000;text-align:left;z-index:7;-webkit-text-stroke:0.1px #000;">Пиво</div>
<div style="position:absolute;left:634.7px;top:640.92px;white-space:nowrap;font:normal 10.6px/11px 'Liberation Serif', serif;color:#000;text-align:left;z-index:7;-webkit-text-stroke:0.1px #000;">Тютюнові вироби, тютюн та<br>промислові замінники тютюну</div>
<div style="position:absolute;left:634px;top:669.5px;width:143px;height:48.5px;overflow:hidden;z-index:7">
<div style="position:absolute;left:0.7px;top:-0.80px;white-space:nowrap;font:normal 10.6px/11.05px 'Liberation Serif', serif;color:#000">Підакцизні товари, що були<br>зіпсовані, знищені, або товари,<br>наявність чи<br>місцезнаходження яких не<br>підтверджено</div>
</div>
<div style="position:absolute;left:777px;top:548.11px;width:202px;white-space:nowrap;font:normal 10.4px/11.96px 'Liberation Serif', serif;color:#000;text-align:center;z-index:7;-webkit-text-stroke:0.1px #000;">720,00</div>
<div style="position:absolute;left:979px;top:547.93px;width:73px;white-space:nowrap;font:normal 10.6px/12.19px 'Liberation Serif', serif;color:#000;text-align:center;z-index:7;-webkit-text-stroke:0.1px #000;">-</div>
<div style="position:absolute;left:1052px;top:548.11px;width:108px;white-space:nowrap;font:normal 10.4px/11.96px 'Liberation Serif', serif;color:#000;text-align:center;z-index:7;-webkit-text-stroke:0.1px #000;">200,000</div>
<div style="position:absolute;left:777px;top:587.43px;width:202px;white-space:nowrap;font:normal 10.6px/12.19px 'Liberation Serif', serif;color:#000;text-align:center;z-index:7;-webkit-text-stroke:0.1px #000;">-</div>
<div style="position:absolute;left:979px;top:587.43px;width:73px;white-space:nowrap;font:normal 10.6px/12.19px 'Liberation Serif', serif;color:#000;text-align:center;z-index:7;-webkit-text-stroke:0.1px #000;">-</div>
<div style="position:absolute;left:1052px;top:587.43px;width:108px;white-space:nowrap;font:normal 10.6px/12.19px 'Liberation Serif', serif;color:#000;text-align:center;z-index:7;-webkit-text-stroke:0.1px #000;">-</div>
<div style="position:absolute;left:777px;top:626.93px;width:202px;white-space:nowrap;font:normal 10.6px/12.19px 'Liberation Serif', serif;color:#000;text-align:center;z-index:7;-webkit-text-stroke:0.1px #000;">-</div>
<div style="position:absolute;left:979px;top:626.93px;width:73px;white-space:nowrap;font:normal 10.6px/12.19px 'Liberation Serif', serif;color:#000;text-align:center;z-index:7;-webkit-text-stroke:0.1px #000;">-</div>
<div style="position:absolute;left:1052px;top:626.93px;width:108px;white-space:nowrap;font:normal 10.6px/12.19px 'Liberation Serif', serif;color:#000;text-align:center;z-index:7;-webkit-text-stroke:0.1px #000;">-</div>
<div style="position:absolute;left:777px;top:648.93px;width:202px;white-space:nowrap;font:normal 10.6px/12.19px 'Liberation Serif', serif;color:#000;text-align:center;z-index:7;-webkit-text-stroke:0.1px #000;">-</div>
<div style="position:absolute;left:979px;top:648.93px;width:73px;white-space:nowrap;font:normal 10.6px/12.19px 'Liberation Serif', serif;color:#000;text-align:center;z-index:7;-webkit-text-stroke:0.1px #000;">-</div>
<div style="position:absolute;left:1052px;top:648.93px;width:108px;white-space:nowrap;font:normal 10.6px/12.19px 'Liberation Serif', serif;color:#000;text-align:center;z-index:7;-webkit-text-stroke:0.1px #000;">-</div>
<div style="position:absolute;left:777px;top:687.43px;width:202px;white-space:nowrap;font:normal 10.6px/12.19px 'Liberation Serif', serif;color:#000;text-align:center;z-index:7;-webkit-text-stroke:0.1px #000;">-</div>
<div style="position:absolute;left:979px;top:687.43px;width:73px;white-space:nowrap;font:normal 10.6px/12.19px 'Liberation Serif', serif;color:#000;text-align:center;z-index:7;-webkit-text-stroke:0.1px #000;">-</div>
<div style="position:absolute;left:1052px;top:687.43px;width:108px;white-space:nowrap;font:normal 10.6px/12.19px 'Liberation Serif', serif;color:#000;text-align:center;z-index:7;-webkit-text-stroke:0.1px #000;">-</div>
<svg style="left:1047px;top:547px;z-index:8" width="5" height="5" viewBox="0 0 5 5"><path d="M0 0 H5 V5Z" fill="#f00"/></svg>
<svg style="left:1047px;top:563px;z-index:8" width="5" height="5" viewBox="0 0 5 5"><path d="M0 0 H5 V5Z" fill="#f00"/></svg>
<svg style="left:1047px;top:626px;z-index:8" width="5" height="5" viewBox="0 0 5 5"><path d="M0 0 H5 V5Z" fill="#f00"/></svg>
<svg style="left:1047px;top:642px;z-index:8" width="5" height="5" viewBox="0 0 5 5"><path d="M0 0 H5 V5Z" fill="#f00"/></svg>
<svg style="left:1047px;top:670px;z-index:8" width="5" height="5" viewBox="0 0 5 5"><path d="M0 0 H5 V5Z" fill="#f00"/></svg>
<div style="position:absolute;left:900px;top:719.39px;width:149.4px;white-space:nowrap;font:normal 10.2px/11.73px 'Liberation Serif', serif;color:#000;text-align:right;z-index:7;-webkit-text-stroke:0.1px #000;">Усього:</div>
<div style="position:absolute;left:1052px;top:719.21px;width:108px;white-space:nowrap;font:normal 10.4px/11.96px 'Liberation Serif', serif;color:#000;text-align:center;z-index:7;-webkit-text-stroke:0.1px #000;">200,00</div>
<div style="position:absolute;left:613.2px;top:740.07px;white-space:nowrap;font:bold 10.66px/12.26px 'Liberation Serif', serif;color:#000;text-align:left;z-index:7;-webkit-text-stroke:0.1px #000;">Засвідчую достовірність зазначених відомостей</div>
<div style="position:absolute;left:613.2px;top:751.95px;white-space:nowrap;font:bold 10.66px/10.5px 'Liberation Serif', serif;color:#000;text-align:left;z-index:7;-webkit-text-stroke:0.1px #000;">Керівник, або фізична особа - платник<br>податку, або уповноважена особа</div>
<div style="position:absolute;left:612px;top:786.92px;width:143px;white-space:nowrap;font:normal 10.5px/12.07px 'Liberation Serif', serif;color:#000;text-align:center;z-index:7;-webkit-text-stroke:0.1px #000;">2536920078</div>
<div style="position:absolute;left:777px;top:785.93px;width:80px;white-space:nowrap;font:normal 9.5px/10.92px 'Liberation Serif', serif;color:#000;text-align:center;z-index:7;-webkit-text-stroke:0.1px #000;">30012024</div>
<div style="position:absolute;left:1008px;top:786.29px;width:152px;white-space:nowrap;font:normal 9.65px/11.1px 'Liberation Serif', serif;color:#000;text-align:center;z-index:7;-webkit-text-stroke:0.1px #000;">Андрійчук С. М.</div>
<div style="position:absolute;left:612px;top:799px;width:144px;height:1px;background:#000;z-index:7"></div>
<div style="position:absolute;left:777px;top:799px;width:81px;height:1px;background:#000;z-index:7"></div>
<div style="position:absolute;left:871px;top:799px;width:124px;height:1px;background:#000;z-index:7"></div>
<div style="position:absolute;left:1008px;top:799px;width:153px;height:1px;background:#000;z-index:7"></div>
<div style="position:absolute;left:612px;top:800.56px;width:143px;white-space:nowrap;font:normal 9px/10px 'Liberation Serif', serif;color:#000;text-align:center;z-index:7;-webkit-text-stroke:0.1px #000;letter-spacing:-0.2px">(реєстраційний номер облікової<br>картки платника податків  або серія та<br>номер паспорта1)</div>
<div style="position:absolute;left:777px;top:798.74px;width:80px;white-space:nowrap;font:normal 9.6px/11.04px 'Liberation Serif', serif;color:#000;text-align:center;z-index:7;-webkit-text-stroke:0.1px #000;">(дата)</div>
<div style="position:absolute;left:871px;top:799.24px;width:123px;white-space:nowrap;font:normal 9.6px/11.04px 'Liberation Serif', serif;color:#000;text-align:center;z-index:7;-webkit-text-stroke:0.1px #000;">(підпис)</div>
<div style="position:absolute;left:1008px;top:799.42px;width:152px;white-space:nowrap;font:normal 9.4px/10.81px 'Liberation Serif', serif;color:#000;text-align:center;z-index:7;-webkit-text-stroke:0.1px #000;">(власне ім’я, прізвище)</div>
<div style="position:absolute;left:613.2px;top:837.67px;white-space:nowrap;font:bold 10.55px/12.13px 'Liberation Serif', serif;color:#000;text-align:left;z-index:7;-webkit-text-stroke:0.1px #000;">Особа, яка відповідає за ведення бухгалтерського облів</div>
</body></html>
